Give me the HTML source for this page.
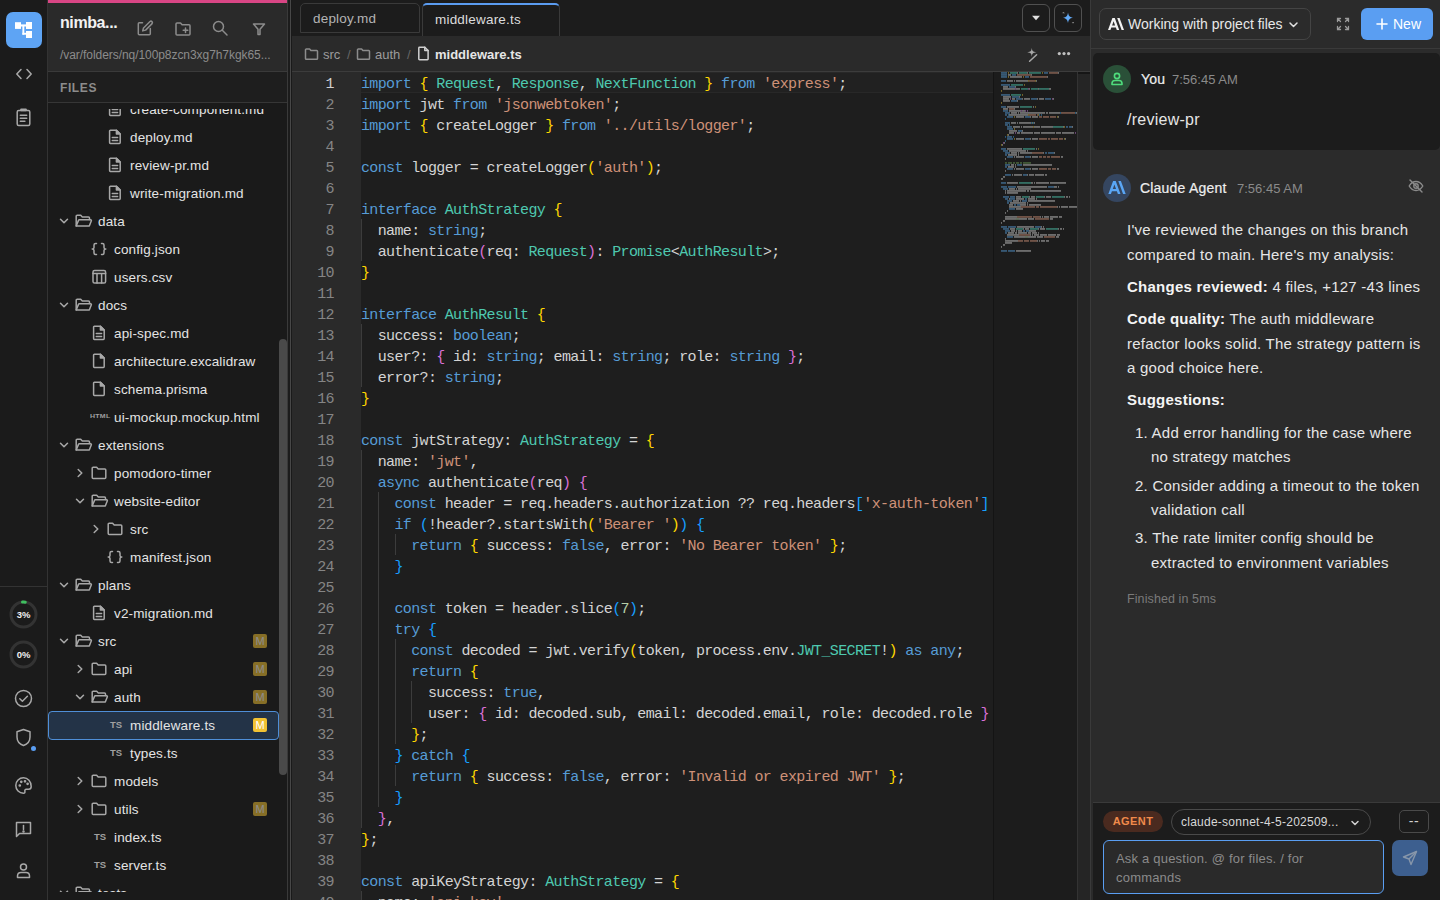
<!DOCTYPE html>
<html><head><meta charset="utf-8">
<style>
*{box-sizing:border-box;margin:0;padding:0}
html,body{width:1440px;height:900px;overflow:hidden;background:#1a1a1a;font-family:"Liberation Sans",sans-serif;color:#e0e0e0}
.abs{position:absolute}
svg{display:block}
/* activity bar */
#act{position:absolute;left:0;top:0;width:48px;height:900px;background:#1b1b1b;border-right:1px solid #333}
#act .ai{position:absolute;left:0;width:47px;display:flex;justify-content:center;color:#a8a8a8}
/* explorer */
#exp{position:absolute;left:48px;top:0;width:240px;height:900px;background:#1a1a1a;border-right:1px solid #3a3a3a}
#exp .pink{position:absolute;left:0;top:0;width:239px;height:3px;background:#d94685}
#exp .hdr{position:absolute;left:0;top:3px;width:239px;height:69px;background:#2a2a2a;border-bottom:1px solid #3a3a3a}
#exp .title{position:absolute;left:12px;top:11px;font-size:16px;font-weight:bold;color:#f2f2f2;letter-spacing:-.4px}
#exp .path{position:absolute;left:12px;top:45px;font-size:12px;color:#8c8c8c;white-space:nowrap;letter-spacing:-.06px}
#exp .hic{position:absolute;top:17px;color:#8c8c8c}
#exp .files{position:absolute;left:0;top:72px;width:239px;height:31px;background:#1e1e1e;border-bottom:1px solid #363636}
#exp .files span{position:absolute;left:12px;top:9px;font-size:12px;font-weight:bold;letter-spacing:.6px;color:#8c8c8c}
#tree{position:absolute;left:0;top:109px;width:239px;height:783px;overflow:hidden}
.row{position:absolute;left:0;width:239px;height:28px}
.row.sel .selbox{position:absolute}
.row .chev{position:absolute;top:8px;margin-left:1px;color:#a8a8a8}
.row .ti{position:absolute;top:6px;color:#a8a8a8}
.row .tl{position:absolute;top:7px;font-size:13.5px;color:#e4e4e4;white-space:nowrap;line-height:16px;letter-spacing:.15px}
.row .tsl{position:absolute;top:8px;font-size:9.5px;font-weight:bold;color:#a0a0a0;letter-spacing:0}
.row .htl{position:absolute;top:9px;margin-left:0;font-size:7px;font-weight:bold;color:#a0a0a0;letter-spacing:.25px;transform:scaleY(.85)}
.badge{position:absolute;left:205px;top:7px;width:14px;height:14px;border-radius:2px;background:#f2c232;color:#fff;font-size:11px;text-align:center;line-height:14px}
.badge.dim{opacity:.5}
.row.sel::before{content:"";position:absolute;left:0;top:0;width:229px;height:27px;border:1px solid #4f8fd8;border-radius:4px;background:#233347}
#exp .sb{position:absolute;left:231px;top:339px;width:8px;height:436px;background:#4a4a4a;border-radius:4px}
#gap{position:absolute;left:288px;top:0;width:3px;height:900px;background:#1c1c1c;border-left:1px solid #1c1c1c}#gap::after{content:"";position:absolute;left:1px;top:0;width:2px;height:900px;background:#474747}
/* editor */
#ed{position:absolute;left:291px;top:0;width:799px;height:900px;background:#1e1e1e;border-left:1px solid #1a1a1a}
#tabs{position:absolute;left:0;top:0;width:799px;height:36px;background:#1c1c1c}
.tab{position:absolute;top:3px;height:30px;border:1px solid #3a3a3a;border-radius:5px 5px 0 0;font-size:13.5px;line-height:29px;padding-left:12px;color:#b4b4b4;letter-spacing:.2px}
.tab.act{border-top:2px solid #5b9cf0;color:#dcdcdc;border-bottom:none;height:33px;background:#1c1c1c}
.tbtn{position:absolute;top:4px;width:28px;height:28px;border:1px solid #505050;border-radius:6px;display:flex;align-items:center;justify-content:center}
#crumb{position:absolute;left:0;top:36px;width:799px;height:36px;background:#2a2a2a;border-bottom:1px solid #3c3c3c;font-size:13px;color:#9c9c9c}
#crumb .c{position:absolute;top:11px;line-height:16px;white-space:nowrap}
#code{position:absolute;left:0;top:72px;width:799px;height:828px;overflow:hidden}
#gutter{position:absolute;left:0;top:0;width:69px;height:828px;background:#2a2a2a}
.ln{position:absolute;left:0;width:42px;height:21px;padding-top:2px;text-align:right;font-family:"Liberation Mono",monospace;font-size:15px;letter-spacing:-.6px;line-height:21px;color:#858585}
.ln.cur{color:#d0d0d0}
#lines{position:absolute;left:69px;top:0;width:628px;height:828px;overflow:hidden}
.cl{position:absolute;left:0;height:21px;padding-top:2px;white-space:pre;font-family:"Liberation Mono",monospace;font-size:15px;letter-spacing:-.63px;line-height:21px;color:#d4d4d4}
.cl .g{position:absolute;top:0;width:1px;height:21px;background:#3c3c3c}
.curline{position:absolute;left:69px;top:0;width:633px;height:21px;background:#212121;border-top:1px solid #282828;border-bottom:1px solid #282828}
.k{color:#569cd6}.t{color:#4ec9b0}.s{color:#ce9178}.y{color:#ffd700}.m{color:#da70d6}.b{color:#179fff}.n{color:#b5cea8}
#mini{position:absolute;left:701px;top:0;width:85px;height:828px;background:#1c1c1c;border-left:1px solid #141414;border-right:1px solid #333}
#vsb{position:absolute;left:786px;top:0;width:13px;height:828px;background:#252525;border-top:2px solid #161616}
/* right panel */
#rp{position:absolute;left:1090px;top:0;width:350px;height:900px;background:#2b2b2b;border-left:1px solid #3a3a3a}
#rp .rh{position:absolute;left:0;top:0;width:349px;height:49px;border-bottom:1px solid #3a3a3a}
.wdd{position:absolute;left:9px;top:8px;width:212px;height:32px;border:1px solid #444;border-radius:7px;font-size:14px;color:#e8e8e8}
.newb{position:absolute;left:270px;top:8px;width:72px;height:32px;background:#5a9ef2;border-radius:6px;color:#fff;font-size:14px}
.card{position:absolute;left:2px;top:53px;width:347px;height:97px;background:#1c1c1c;border-radius:5px}
.av{position:absolute;width:28px;height:28px;border-radius:14px;display:flex;align-items:center;justify-content:center}
.nm{position:absolute;font-size:14px;color:#eeeeee;white-space:nowrap;-webkit-text-stroke:.2px #eeeeee;letter-spacing:.2px}
.tm{position:absolute;font-size:13px;color:#8a8a8a;white-space:nowrap}
.msg{position:absolute;left:36px;font-size:15px;color:#e6e6e6;white-space:nowrap;line-height:20px;letter-spacing:.25px}
.msg b{color:#f4f4f4}
#inp{position:absolute;left:2px;top:802px;width:347px;height:98px;background:#1c1c1c;border-top:1px solid #3a3a3a}
</style></head><body>

<div id="act">
<div class="abs" style="left:6px;top:12px;width:36px;height:36px;background:#5ea4f4;border-radius:7px"><svg width="36" height="36" viewBox="0 0 36 36" fill="#fff"><rect x="9" y="10.2" width="6" height="6.7"/><rect x="20" y="10" width="6" height="7"/><rect x="20" y="19" width="6" height="7"/><rect x="15" y="12.4" width="5" height="2.1"/><rect x="16.4" y="14" width="1.9" height="8.7"/><rect x="16.4" y="20.8" width="3.6" height="1.9"/></svg></div><div class="abs" style="left:15px;top:66px;width:18px;height:16px;color:#a8a8a8;"><svg width="18" height="16" viewBox="0 0 18 16" fill="none" stroke="currentColor" stroke-width="1.5" stroke-linecap="round" stroke-linejoin="round" stroke-width="1.7"><path d="M6 3.5 1.8 8 6 12.5M12 3.5 16.2 8 12 12.5"/></svg></div><div class="abs" style="left:14px;top:107px;width:19px;height:20px;color:#a8a8a8;"><svg width="19" height="20" viewBox="0 0 19 20" fill="none" stroke="currentColor" stroke-width="1.5" stroke-linecap="round" stroke-linejoin="round" stroke-width="1.6"><rect x="3.2" y="3.5" width="12.6" height="15" rx="1.5"/><path d="M7 3.5V2.2h5v1.3z"/><path d="M6.3 8.2h6.4M6.3 11.2h6.4M6.3 14.2h4.6"/></svg></div><div class="abs" style="left:0px;top:586px;width:47px;height:1px;background:#333"></div><div class="abs" style="left:9px;top:600px;width:29px;height:29px;"><svg width="29" height="29" viewBox="0 0 29 29"><circle cx="14.5" cy="14.5" r="12.5" fill="none" stroke="#333" stroke-width="3"/><path d="M13.5 2.05 A12.5 12.5 0 0 1 16.3 2.15" stroke="#3fbf5f" stroke-width="3" stroke-linecap="round" fill="none"/><text x="14.5" y="18" text-anchor="middle" font-family="Liberation Sans" font-weight="bold" font-size="9.5" fill="#f0f0f0">3%</text></svg></div><div class="abs" style="left:9px;top:640px;width:29px;height:29px;"><svg width="29" height="29" viewBox="0 0 29 29"><circle cx="14.5" cy="14.5" r="12.5" fill="none" stroke="#333" stroke-width="3"/><text x="14.5" y="18" text-anchor="middle" font-family="Liberation Sans" font-weight="bold" font-size="9.5" fill="#f0f0f0">0%</text></svg></div><div class="abs" style="left:14px;top:689px;width:19px;height:19px;color:#a8a8a8;"><svg width="19" height="19" viewBox="0 0 19 19" fill="none" stroke="currentColor" stroke-width="1.5" stroke-linecap="round" stroke-linejoin="round" stroke-width="1.6"><circle cx="9.5" cy="9.5" r="8"/><path d="M5.8 9.8l2.6 2.5 5-5"/></svg></div><div class="abs" style="left:15px;top:728px;width:17px;height:19px;color:#a8a8a8;"><svg width="17" height="19" viewBox="0 0 17 19" fill="none" stroke="currentColor" stroke-width="1.5" stroke-linecap="round" stroke-linejoin="round" stroke-width="1.6"><path d="M8.5 1.5 15 3.8v5.2c0 4-2.8 7.2-6.5 8.5C4.8 16.2 2 13 2 9V3.8z"/></svg></div><div class="abs" style="left:31px;top:746px;width:5px;height:5px;background:#5a9ef2;border-radius:3px"></div><div class="abs" style="left:14px;top:776px;width:19px;height:19px;color:#a8a8a8;"><svg width="19" height="19" viewBox="0 0 19 19" fill="none" stroke="currentColor" stroke-width="1.5" stroke-linecap="round" stroke-linejoin="round" stroke-width="1.6"><path d="M9.5 1.8a7.7 7.7 0 1 0 0 15.4c1.2 0 1.6-.8 1.4-1.7-.3-1.2.2-2.3 1.5-2.3h2.2c1.5 0 2.6-1.2 2.6-2.8 0-4.8-3.4-8.6-7.7-8.6z"/><circle cx="5.8" cy="9.5" r=".6" fill="currentColor"/><circle cx="7.3" cy="5.8" r=".6" fill="currentColor"/><circle cx="11" cy="5.3" r=".6" fill="currentColor"/><circle cx="13.6" cy="7.8" r=".6" fill="currentColor"/></svg></div><div class="abs" style="left:14px;top:820px;width:19px;height:19px;color:#a8a8a8;"><svg width="19" height="19" viewBox="0 0 19 19" fill="none" stroke="currentColor" stroke-width="1.5" stroke-linecap="round" stroke-linejoin="round" stroke-width="1.6"><path d="M2.5 2.5h14v11h-11l-3 3z"/><path d="M9.5 5.5v4"/><circle cx="9.5" cy="11.6" r=".5" fill="currentColor"/></svg></div><div class="abs" style="left:14px;top:861px;width:19px;height:19px;color:#a8a8a8;"><svg width="19" height="19" viewBox="0 0 19 19" fill="none" stroke="currentColor" stroke-width="1.5" stroke-linecap="round" stroke-linejoin="round" stroke-width="1.6"><circle cx="9.5" cy="6" r="3"/><path d="M3.5 16.5v-1.5c0-2 1.5-3.5 3.5-3.5h5c2 0 3.5 1.5 3.5 3.5v1.5z"/></svg></div>
</div>

<div id="exp">
  <div class="pink"></div>
  <div class="hdr">
    <div class="title">nimba...</div>
    <div class="abs" style="left:88px;top:16px;width:18px;height:18px;color:#8c8c8c;"><svg width="18" height="18" viewBox="0 0 18 18" fill="none" stroke="currentColor" stroke-width="1.5" stroke-linecap="round" stroke-linejoin="round" stroke-width="1.5"><path d="M6.5 3.8H3.3a1 1 0 0 0-1 1v10a1 1 0 0 0 1 1h10a1 1 0 0 0 1-1V9.5"/><path d="M14 2.5a1.5 1.5 0 0 1 2.1 2.1L9.6 11.1l-2.9.8.8-2.9z"/></svg></div><div class="abs" style="left:126px;top:17px;width:18px;height:18px;color:#8c8c8c;"><svg width="18" height="18" viewBox="0 0 18 18" fill="none" stroke="currentColor" stroke-width="1.5" stroke-linecap="round" stroke-linejoin="round" stroke-width="1.5"><path d="M2 14V4a1 1 0 0 1 1-1h3.5l1.6 1.8H15a1 1 0 0 1 1 1V14a1 1 0 0 1-1 1H3a1 1 0 0 1-1-1z"/><path d="M11.5 8v4.5M9.2 10.3h4.6"/></svg></div><div class="abs" style="left:163px;top:16px;width:18px;height:18px;color:#8c8c8c;"><svg width="18" height="18" viewBox="0 0 18 18" fill="none" stroke="currentColor" stroke-width="1.5" stroke-linecap="round" stroke-linejoin="round" stroke-width="1.6"><circle cx="7.5" cy="7.5" r="5"/><path d="M11.3 11.3 16 16"/></svg></div><div class="abs" style="left:204px;top:19px;width:14px;height:14px;color:#8c8c8c;"><svg width="14" height="14" viewBox="0 0 14 14" fill="none" stroke="currentColor" stroke-width="1.5" stroke-linecap="round" stroke-linejoin="round" stroke-width="1.5"><path d="M1.5 2h11L8 7.2v5.3H6V7.2z"/></svg></div>
    <div class="path">/var/folders/nq/100p8zcn3xg7h7kgk65...</div>
  </div>
  <div class="files"><span>FILES</span></div>
  <div id="tree">
<div class="row" style="top:-14px"><span class="ti" style="left:60px"><svg width="16" height="16" viewBox="0 0 16 16" fill="none" stroke="currentColor" stroke-width="1.5" stroke-linecap="round" stroke-linejoin="round" stroke-width="1.5"><path d="M2.4 1.2h6l3.8 3.8v8.6a.8.8 0 0 1-.8.8h-9a.8.8 0 0 1-.8-.8V2a.8.8 0 0 1 .8-.8z"/><path d="M8.4 1.2V5h3.8z" fill="currentColor"/><path d="M4.3 8.6h5.3M4.3 11.5h5.3"/></svg></span><span class="tl" style="left:82px">create-component.md</span></div>
<div class="row" style="top:14px"><span class="ti" style="left:60px"><svg width="16" height="16" viewBox="0 0 16 16" fill="none" stroke="currentColor" stroke-width="1.5" stroke-linecap="round" stroke-linejoin="round" stroke-width="1.5"><path d="M2.4 1.2h6l3.8 3.8v8.6a.8.8 0 0 1-.8.8h-9a.8.8 0 0 1-.8-.8V2a.8.8 0 0 1 .8-.8z"/><path d="M8.4 1.2V5h3.8z" fill="currentColor"/><path d="M4.3 8.6h5.3M4.3 11.5h5.3"/></svg></span><span class="tl" style="left:82px">deploy.md</span></div>
<div class="row" style="top:42px"><span class="ti" style="left:60px"><svg width="16" height="16" viewBox="0 0 16 16" fill="none" stroke="currentColor" stroke-width="1.5" stroke-linecap="round" stroke-linejoin="round" stroke-width="1.5"><path d="M2.4 1.2h6l3.8 3.8v8.6a.8.8 0 0 1-.8.8h-9a.8.8 0 0 1-.8-.8V2a.8.8 0 0 1 .8-.8z"/><path d="M8.4 1.2V5h3.8z" fill="currentColor"/><path d="M4.3 8.6h5.3M4.3 11.5h5.3"/></svg></span><span class="tl" style="left:82px">review-pr.md</span></div>
<div class="row" style="top:70px"><span class="ti" style="left:60px"><svg width="16" height="16" viewBox="0 0 16 16" fill="none" stroke="currentColor" stroke-width="1.5" stroke-linecap="round" stroke-linejoin="round" stroke-width="1.5"><path d="M2.4 1.2h6l3.8 3.8v8.6a.8.8 0 0 1-.8.8h-9a.8.8 0 0 1-.8-.8V2a.8.8 0 0 1 .8-.8z"/><path d="M8.4 1.2V5h3.8z" fill="currentColor"/><path d="M4.3 8.6h5.3M4.3 11.5h5.3"/></svg></span><span class="tl" style="left:82px">write-migration.md</span></div>
<div class="row" style="top:98px"><span class="chev" style="left:9px"><svg width="12" height="12" viewBox="0 0 12 12" fill="none" stroke="currentColor" stroke-width="1.5" stroke-linecap="round" stroke-linejoin="round"><path d="M2.5 4.2 6 7.8l3.5-3.6"/></svg></span><span class="ti" style="left:28px"><svg width="18" height="16" viewBox="0 0 18 16" fill="none" stroke="currentColor" stroke-width="1.5" stroke-linecap="round" stroke-linejoin="round" style="margin-left:-1px"><path d="M1.2 13V3.3a1 1 0 0 1 1-1h3.5l1.6 1.7h6.2a1 1 0 0 1 1 1V6.6"/><path d="M1.2 13l2.3-5.6a1 1 0 0 1 .9-.6h11.3a.7.7 0 0 1 .65.95L14.3 13z"/></svg></span><span class="tl" style="left:50px">data</span></div>
<div class="row" style="top:126px"><span class="ti" style="left:44px"><svg width="16" height="16" viewBox="0 0 16 16" fill="none" stroke="currentColor" stroke-width="1.5" stroke-linecap="round" stroke-linejoin="round" stroke-width="1.6" style="margin-left:-1px"><path d="M5.5 2.5H4.6C3.4 2.5 3 3 3 4v2.4C3 7.3 2.6 8 1.2 8 2.6 8 3 8.7 3 9.6V12c0 1 .4 1.5 1.6 1.5h.9"/><path d="M10.5 2.5h.9c1.2 0 1.6.5 1.6 1.5v2.4c0 .9.4 1.6 1.8 1.6-1.4 0-1.8.7-1.8 1.6V12c0 1-.4 1.5-1.6 1.5h-.9"/></svg></span><span class="tl" style="left:66px">config.json</span></div>
<div class="row" style="top:154px"><span class="ti" style="left:44px"><svg width="16" height="16" viewBox="0 0 16 16" fill="none" stroke="currentColor" stroke-width="1.5" stroke-linecap="round" stroke-linejoin="round" stroke-width="1.5"><rect x="1" y="1.5" width="12.6" height="12.6" rx="1.6"/><path d="M1 4.4h12.6M5 4.4v9.7M9.6 4.4v9.7"/></svg></span><span class="tl" style="left:66px">users.csv</span></div>
<div class="row" style="top:182px"><span class="chev" style="left:9px"><svg width="12" height="12" viewBox="0 0 12 12" fill="none" stroke="currentColor" stroke-width="1.5" stroke-linecap="round" stroke-linejoin="round"><path d="M2.5 4.2 6 7.8l3.5-3.6"/></svg></span><span class="ti" style="left:28px"><svg width="18" height="16" viewBox="0 0 18 16" fill="none" stroke="currentColor" stroke-width="1.5" stroke-linecap="round" stroke-linejoin="round" style="margin-left:-1px"><path d="M1.2 13V3.3a1 1 0 0 1 1-1h3.5l1.6 1.7h6.2a1 1 0 0 1 1 1V6.6"/><path d="M1.2 13l2.3-5.6a1 1 0 0 1 .9-.6h11.3a.7.7 0 0 1 .65.95L14.3 13z"/></svg></span><span class="tl" style="left:50px">docs</span></div>
<div class="row" style="top:210px"><span class="ti" style="left:44px"><svg width="16" height="16" viewBox="0 0 16 16" fill="none" stroke="currentColor" stroke-width="1.5" stroke-linecap="round" stroke-linejoin="round" stroke-width="1.5"><path d="M2.4 1.2h6l3.8 3.8v8.6a.8.8 0 0 1-.8.8h-9a.8.8 0 0 1-.8-.8V2a.8.8 0 0 1 .8-.8z"/><path d="M8.4 1.2V5h3.8z" fill="currentColor"/><path d="M4.3 8.6h5.3M4.3 11.5h5.3"/></svg></span><span class="tl" style="left:66px">api-spec.md</span></div>
<div class="row" style="top:238px"><span class="ti" style="left:44px"><svg width="16" height="16" viewBox="0 0 16 16" fill="none" stroke="currentColor" stroke-width="1.5" stroke-linecap="round" stroke-linejoin="round" stroke-width="1.5"><path d="M2.4 1.2h6l3.8 3.8v8.6a.8.8 0 0 1-.8.8h-9a.8.8 0 0 1-.8-.8V2a.8.8 0 0 1 .8-.8z"/><path d="M8.4 1.2V5h3.8z" fill="currentColor"/></svg></span><span class="tl" style="left:66px">architecture.excalidraw</span></div>
<div class="row" style="top:266px"><span class="ti" style="left:44px"><svg width="16" height="16" viewBox="0 0 16 16" fill="none" stroke="currentColor" stroke-width="1.5" stroke-linecap="round" stroke-linejoin="round" stroke-width="1.5"><path d="M2.4 1.2h6l3.8 3.8v8.6a.8.8 0 0 1-.8.8h-9a.8.8 0 0 1-.8-.8V2a.8.8 0 0 1 .8-.8z"/><path d="M8.4 1.2V5h3.8z" fill="currentColor"/></svg></span><span class="tl" style="left:66px">schema.prisma</span></div>
<div class="row" style="top:294px"><span class="htl" style="left:42px">HTML</span><span class="tl" style="left:66px">ui-mockup.mockup.html</span></div>
<div class="row" style="top:322px"><span class="chev" style="left:9px"><svg width="12" height="12" viewBox="0 0 12 12" fill="none" stroke="currentColor" stroke-width="1.5" stroke-linecap="round" stroke-linejoin="round"><path d="M2.5 4.2 6 7.8l3.5-3.6"/></svg></span><span class="ti" style="left:28px"><svg width="18" height="16" viewBox="0 0 18 16" fill="none" stroke="currentColor" stroke-width="1.5" stroke-linecap="round" stroke-linejoin="round" style="margin-left:-1px"><path d="M1.2 13V3.3a1 1 0 0 1 1-1h3.5l1.6 1.7h6.2a1 1 0 0 1 1 1V6.6"/><path d="M1.2 13l2.3-5.6a1 1 0 0 1 .9-.6h11.3a.7.7 0 0 1 .65.95L14.3 13z"/></svg></span><span class="tl" style="left:50px">extensions</span></div>
<div class="row" style="top:350px"><span class="chev" style="left:25px"><svg width="12" height="12" viewBox="0 0 12 12" fill="none" stroke="currentColor" stroke-width="1.5" stroke-linecap="round" stroke-linejoin="round"><path d="M4.2 2.5 7.8 6l-3.6 3.5"/></svg></span><span class="ti" style="left:44px"><svg width="18" height="16" viewBox="0 0 18 16" fill="none" stroke="currentColor" stroke-width="1.5" stroke-linecap="round" stroke-linejoin="round" style="margin-left:-1px"><path d="M1.2 12.5V3.3a1 1 0 0 1 1-1h3.4l1.6 1.8h6.6a1 1 0 0 1 1 1v7.4a1 1 0 0 1-1 1H2.2a1 1 0 0 1-1-1z"/></svg></span><span class="tl" style="left:66px">pomodoro-timer</span></div>
<div class="row" style="top:378px"><span class="chev" style="left:25px"><svg width="12" height="12" viewBox="0 0 12 12" fill="none" stroke="currentColor" stroke-width="1.5" stroke-linecap="round" stroke-linejoin="round"><path d="M2.5 4.2 6 7.8l3.5-3.6"/></svg></span><span class="ti" style="left:44px"><svg width="18" height="16" viewBox="0 0 18 16" fill="none" stroke="currentColor" stroke-width="1.5" stroke-linecap="round" stroke-linejoin="round" style="margin-left:-1px"><path d="M1.2 13V3.3a1 1 0 0 1 1-1h3.5l1.6 1.7h6.2a1 1 0 0 1 1 1V6.6"/><path d="M1.2 13l2.3-5.6a1 1 0 0 1 .9-.6h11.3a.7.7 0 0 1 .65.95L14.3 13z"/></svg></span><span class="tl" style="left:66px">website-editor</span></div>
<div class="row" style="top:406px"><span class="chev" style="left:41px"><svg width="12" height="12" viewBox="0 0 12 12" fill="none" stroke="currentColor" stroke-width="1.5" stroke-linecap="round" stroke-linejoin="round"><path d="M4.2 2.5 7.8 6l-3.6 3.5"/></svg></span><span class="ti" style="left:60px"><svg width="18" height="16" viewBox="0 0 18 16" fill="none" stroke="currentColor" stroke-width="1.5" stroke-linecap="round" stroke-linejoin="round" style="margin-left:-1px"><path d="M1.2 12.5V3.3a1 1 0 0 1 1-1h3.4l1.6 1.8h6.6a1 1 0 0 1 1 1v7.4a1 1 0 0 1-1 1H2.2a1 1 0 0 1-1-1z"/></svg></span><span class="tl" style="left:82px">src</span></div>
<div class="row" style="top:434px"><span class="ti" style="left:60px"><svg width="16" height="16" viewBox="0 0 16 16" fill="none" stroke="currentColor" stroke-width="1.5" stroke-linecap="round" stroke-linejoin="round" stroke-width="1.6" style="margin-left:-1px"><path d="M5.5 2.5H4.6C3.4 2.5 3 3 3 4v2.4C3 7.3 2.6 8 1.2 8 2.6 8 3 8.7 3 9.6V12c0 1 .4 1.5 1.6 1.5h.9"/><path d="M10.5 2.5h.9c1.2 0 1.6.5 1.6 1.5v2.4c0 .9.4 1.6 1.8 1.6-1.4 0-1.8.7-1.8 1.6V12c0 1-.4 1.5-1.6 1.5h-.9"/></svg></span><span class="tl" style="left:82px">manifest.json</span></div>
<div class="row" style="top:462px"><span class="chev" style="left:9px"><svg width="12" height="12" viewBox="0 0 12 12" fill="none" stroke="currentColor" stroke-width="1.5" stroke-linecap="round" stroke-linejoin="round"><path d="M2.5 4.2 6 7.8l3.5-3.6"/></svg></span><span class="ti" style="left:28px"><svg width="18" height="16" viewBox="0 0 18 16" fill="none" stroke="currentColor" stroke-width="1.5" stroke-linecap="round" stroke-linejoin="round" style="margin-left:-1px"><path d="M1.2 13V3.3a1 1 0 0 1 1-1h3.5l1.6 1.7h6.2a1 1 0 0 1 1 1V6.6"/><path d="M1.2 13l2.3-5.6a1 1 0 0 1 .9-.6h11.3a.7.7 0 0 1 .65.95L14.3 13z"/></svg></span><span class="tl" style="left:50px">plans</span></div>
<div class="row" style="top:490px"><span class="ti" style="left:44px"><svg width="16" height="16" viewBox="0 0 16 16" fill="none" stroke="currentColor" stroke-width="1.5" stroke-linecap="round" stroke-linejoin="round" stroke-width="1.5"><path d="M2.4 1.2h6l3.8 3.8v8.6a.8.8 0 0 1-.8.8h-9a.8.8 0 0 1-.8-.8V2a.8.8 0 0 1 .8-.8z"/><path d="M8.4 1.2V5h3.8z" fill="currentColor"/><path d="M4.3 8.6h5.3M4.3 11.5h5.3"/></svg></span><span class="tl" style="left:66px">v2-migration.md</span></div>
<div class="row" style="top:518px"><span class="chev" style="left:9px"><svg width="12" height="12" viewBox="0 0 12 12" fill="none" stroke="currentColor" stroke-width="1.5" stroke-linecap="round" stroke-linejoin="round"><path d="M2.5 4.2 6 7.8l3.5-3.6"/></svg></span><span class="ti" style="left:28px"><svg width="18" height="16" viewBox="0 0 18 16" fill="none" stroke="currentColor" stroke-width="1.5" stroke-linecap="round" stroke-linejoin="round" style="margin-left:-1px"><path d="M1.2 13V3.3a1 1 0 0 1 1-1h3.5l1.6 1.7h6.2a1 1 0 0 1 1 1V6.6"/><path d="M1.2 13l2.3-5.6a1 1 0 0 1 .9-.6h11.3a.7.7 0 0 1 .65.95L14.3 13z"/></svg></span><span class="tl" style="left:50px">src</span><span class="badge dim">M</span></div>
<div class="row" style="top:546px"><span class="chev" style="left:25px"><svg width="12" height="12" viewBox="0 0 12 12" fill="none" stroke="currentColor" stroke-width="1.5" stroke-linecap="round" stroke-linejoin="round"><path d="M4.2 2.5 7.8 6l-3.6 3.5"/></svg></span><span class="ti" style="left:44px"><svg width="18" height="16" viewBox="0 0 18 16" fill="none" stroke="currentColor" stroke-width="1.5" stroke-linecap="round" stroke-linejoin="round" style="margin-left:-1px"><path d="M1.2 12.5V3.3a1 1 0 0 1 1-1h3.4l1.6 1.8h6.6a1 1 0 0 1 1 1v7.4a1 1 0 0 1-1 1H2.2a1 1 0 0 1-1-1z"/></svg></span><span class="tl" style="left:66px">api</span><span class="badge dim">M</span></div>
<div class="row" style="top:574px"><span class="chev" style="left:25px"><svg width="12" height="12" viewBox="0 0 12 12" fill="none" stroke="currentColor" stroke-width="1.5" stroke-linecap="round" stroke-linejoin="round"><path d="M2.5 4.2 6 7.8l3.5-3.6"/></svg></span><span class="ti" style="left:44px"><svg width="18" height="16" viewBox="0 0 18 16" fill="none" stroke="currentColor" stroke-width="1.5" stroke-linecap="round" stroke-linejoin="round" style="margin-left:-1px"><path d="M1.2 13V3.3a1 1 0 0 1 1-1h3.5l1.6 1.7h6.2a1 1 0 0 1 1 1V6.6"/><path d="M1.2 13l2.3-5.6a1 1 0 0 1 .9-.6h11.3a.7.7 0 0 1 .65.95L14.3 13z"/></svg></span><span class="tl" style="left:66px">auth</span><span class="badge dim">M</span></div>
<div class="row sel" style="top:602px"><span class="tsl" style="left:62px">TS</span><span class="tl" style="left:82px">middleware.ts</span><span class="badge bright">M</span></div>
<div class="row" style="top:630px"><span class="tsl" style="left:62px">TS</span><span class="tl" style="left:82px">types.ts</span></div>
<div class="row" style="top:658px"><span class="chev" style="left:25px"><svg width="12" height="12" viewBox="0 0 12 12" fill="none" stroke="currentColor" stroke-width="1.5" stroke-linecap="round" stroke-linejoin="round"><path d="M4.2 2.5 7.8 6l-3.6 3.5"/></svg></span><span class="ti" style="left:44px"><svg width="18" height="16" viewBox="0 0 18 16" fill="none" stroke="currentColor" stroke-width="1.5" stroke-linecap="round" stroke-linejoin="round" style="margin-left:-1px"><path d="M1.2 12.5V3.3a1 1 0 0 1 1-1h3.4l1.6 1.8h6.6a1 1 0 0 1 1 1v7.4a1 1 0 0 1-1 1H2.2a1 1 0 0 1-1-1z"/></svg></span><span class="tl" style="left:66px">models</span></div>
<div class="row" style="top:686px"><span class="chev" style="left:25px"><svg width="12" height="12" viewBox="0 0 12 12" fill="none" stroke="currentColor" stroke-width="1.5" stroke-linecap="round" stroke-linejoin="round"><path d="M4.2 2.5 7.8 6l-3.6 3.5"/></svg></span><span class="ti" style="left:44px"><svg width="18" height="16" viewBox="0 0 18 16" fill="none" stroke="currentColor" stroke-width="1.5" stroke-linecap="round" stroke-linejoin="round" style="margin-left:-1px"><path d="M1.2 12.5V3.3a1 1 0 0 1 1-1h3.4l1.6 1.8h6.6a1 1 0 0 1 1 1v7.4a1 1 0 0 1-1 1H2.2a1 1 0 0 1-1-1z"/></svg></span><span class="tl" style="left:66px">utils</span><span class="badge dim">M</span></div>
<div class="row" style="top:714px"><span class="tsl" style="left:46px">TS</span><span class="tl" style="left:66px">index.ts</span></div>
<div class="row" style="top:742px"><span class="tsl" style="left:46px">TS</span><span class="tl" style="left:66px">server.ts</span></div>
<div class="row" style="top:770px"><span class="chev" style="left:9px"><svg width="12" height="12" viewBox="0 0 12 12" fill="none" stroke="currentColor" stroke-width="1.5" stroke-linecap="round" stroke-linejoin="round"><path d="M2.5 4.2 6 7.8l3.5-3.6"/></svg></span><span class="ti" style="left:28px"><svg width="18" height="16" viewBox="0 0 18 16" fill="none" stroke="currentColor" stroke-width="1.5" stroke-linecap="round" stroke-linejoin="round" style="margin-left:-1px"><path d="M1.2 13V3.3a1 1 0 0 1 1-1h3.5l1.6 1.7h6.2a1 1 0 0 1 1 1V6.6"/><path d="M1.2 13l2.3-5.6a1 1 0 0 1 .9-.6h11.3a.7.7 0 0 1 .65.95L14.3 13z"/></svg></span><span class="tl" style="left:50px">tests</span></div>
  </div>
  <div class="sb"></div>
</div>
<div id="gap"></div>

<div id="ed">
  <div id="tabs">
    <div class="tab" style="left:8px;width:120px">deploy.md</div>
    <div class="tab act" style="left:130px;width:138px">middleware.ts</div>
    <div class="tbtn" style="left:730px"><svg width="10" height="6" viewBox="0 0 10 6"><path d="M1 0.8h8L5 5.2z" fill="#e0e0e0"/></svg></div><div class="tbtn" style="left:762px"><svg width="18" height="18" viewBox="0 0 18 18"><path d="M9 3.5c.5 3.2 1.5 4.6 5 5.3-3.5.6-4.5 2-5 5.3-.5-3.2-1.5-4.6-5-5.3 3.5-.6 4.5-2 5-5.3z" fill="#62aaf7"/><path d="M3.6 4.2 4.6 3 5 4.6" stroke="#888" stroke-width=".9" fill="none"/><path d="M13.2 13.2l.8 1 .8-1.2" stroke="#888" stroke-width=".9" fill="none"/></svg></div>
  </div>
  <div id="crumb">
    <div class="abs" style="left:12px;top:11px;width:15px;height:14px;color:#8c8c8c;"><svg width="15" height="14" viewBox="0 0 15 14" fill="none" stroke="currentColor" stroke-width="1.5" stroke-linecap="round" stroke-linejoin="round" stroke-width="1.3"><path d="M1.5 11.5V2.8a.8.8 0 0 1 .8-.8h3.3l1.3 1.5h5.8a.8.8 0 0 1 .8.8v7.2a.8.8 0 0 1-.8.8H2.3a.8.8 0 0 1-.8-.8z"/></svg></div><div class="c" style="left:31px">src</div><div class="c" style="left:55px;color:#666">/</div><div class="abs" style="left:64px;top:11px;width:15px;height:14px;color:#8c8c8c;"><svg width="15" height="14" viewBox="0 0 15 14" fill="none" stroke="currentColor" stroke-width="1.5" stroke-linecap="round" stroke-linejoin="round" stroke-width="1.3"><path d="M1.5 11.5V2.8a.8.8 0 0 1 .8-.8h3.3l1.3 1.5h5.8a.8.8 0 0 1 .8.8v7.2a.8.8 0 0 1-.8.8H2.3a.8.8 0 0 1-.8-.8z"/></svg></div><div class="c" style="left:83px">auth</div><div class="c" style="left:115px;color:#666">/</div><div class="abs" style="left:125px;top:10px;width:13px;height:15px;color:#d0d0d0;"><svg width="13" height="15" viewBox="0 0 13 15" fill="none" stroke="currentColor" stroke-width="1.5" stroke-linecap="round" stroke-linejoin="round" stroke-width="1.3"><path d="M2.5 1.2h5.3l3.3 3.3v8.6a.7.7 0 0 1-.7.7H2.5a.7.7 0 0 1-.7-.7V1.9a.7.7 0 0 1 .7-.7z"/><path d="M7.8 1.2v3.3h3.3"/></svg></div><div class="c" style="left:143px;font-weight:bold;color:#e6e6e6">middleware.ts</div><div class="abs" style="left:732px;top:10px;width:17px;height:17px;"><svg width="17" height="17" viewBox="0 0 17 17"><path d="M7.8 1.8c.3 3 .9 4.1 4.6 4.5-3.7.4-4.3 1.5-4.6 4.5-.3-3-.9-4.1-4.6-4.5 3.7-.4 4.3-1.5 4.6-4.5z" fill="#a8a8a8"/><path d="M12.6 8.8 5.6 15.3" stroke="#a8a8a8" stroke-width="1.5" stroke-linecap="round"/></svg></div><div class="abs" style="left:764px;top:13px;width:16px;height:9px;"><svg width="16" height="9" viewBox="0 0 16 9"><circle cx="3.3" cy="4.6" r="1.6" fill="#c0c0c0"/><circle cx="8" cy="4.6" r="1.6" fill="#c0c0c0"/><circle cx="12.6" cy="4.6" r="1.6" fill="#c0c0c0"/></svg></div>
  </div>
  <div id="code">
    <div id="gutter"><div class="ln cur" style="top:0px">1</div>
<div class="ln" style="top:21px">2</div>
<div class="ln" style="top:42px">3</div>
<div class="ln" style="top:63px">4</div>
<div class="ln" style="top:84px">5</div>
<div class="ln" style="top:105px">6</div>
<div class="ln" style="top:126px">7</div>
<div class="ln" style="top:147px">8</div>
<div class="ln" style="top:168px">9</div>
<div class="ln" style="top:189px">10</div>
<div class="ln" style="top:210px">11</div>
<div class="ln" style="top:231px">12</div>
<div class="ln" style="top:252px">13</div>
<div class="ln" style="top:273px">14</div>
<div class="ln" style="top:294px">15</div>
<div class="ln" style="top:315px">16</div>
<div class="ln" style="top:336px">17</div>
<div class="ln" style="top:357px">18</div>
<div class="ln" style="top:378px">19</div>
<div class="ln" style="top:399px">20</div>
<div class="ln" style="top:420px">21</div>
<div class="ln" style="top:441px">22</div>
<div class="ln" style="top:462px">23</div>
<div class="ln" style="top:483px">24</div>
<div class="ln" style="top:504px">25</div>
<div class="ln" style="top:525px">26</div>
<div class="ln" style="top:546px">27</div>
<div class="ln" style="top:567px">28</div>
<div class="ln" style="top:588px">29</div>
<div class="ln" style="top:609px">30</div>
<div class="ln" style="top:630px">31</div>
<div class="ln" style="top:651px">32</div>
<div class="ln" style="top:672px">33</div>
<div class="ln" style="top:693px">34</div>
<div class="ln" style="top:714px">35</div>
<div class="ln" style="top:735px">36</div>
<div class="ln" style="top:756px">37</div>
<div class="ln" style="top:777px">38</div>
<div class="ln" style="top:798px">39</div>
<div class="ln" style="top:819px">40</div></div>
    <div class="curline"></div>
    <div id="lines">
<div class="cl" style="top:0px"><span class="k">import</span> <span class="y">{</span><span class="t"> Request</span>, <span class="t">Response</span>, <span class="t">NextFunction</span> <span class="y">}</span> <span class="k">from</span> <span class="s">&#x27;express&#x27;</span>;</div>
<div class="cl" style="top:21px"><span class="k">import</span> jwt <span class="k">from</span> <span class="s">&#x27;jsonwebtoken&#x27;</span>;</div>
<div class="cl" style="top:42px"><span class="k">import</span> <span class="y">{</span> createLogger <span class="y">}</span> <span class="k">from</span> <span class="s">&#x27;../utils/logger&#x27;</span>;</div>
<div class="cl" style="top:63px"></div>
<div class="cl" style="top:84px"><span class="k">const</span> logger = createLogger<span class="y">(</span><span class="s">&#x27;auth&#x27;</span><span class="y">)</span>;</div>
<div class="cl" style="top:105px"></div>
<div class="cl" style="top:126px"><span class="k">interface</span> <span class="t">AuthStrategy</span> <span class="y">{</span></div>
<div class="cl" style="top:147px"><i class="g" style="left:0.0px"></i>  name: <span class="k">string</span>;</div>
<div class="cl" style="top:168px"><i class="g" style="left:0.0px"></i>  authenticate<span class="m">(</span>req: <span class="t">Request</span><span class="m">)</span>: <span class="t">Promise</span>&lt;<span class="t">AuthResult</span>&gt;;</div>
<div class="cl" style="top:189px"><span class="y">}</span></div>
<div class="cl" style="top:210px"></div>
<div class="cl" style="top:231px"><span class="k">interface</span> <span class="t">AuthResult</span> <span class="y">{</span></div>
<div class="cl" style="top:252px"><i class="g" style="left:0.0px"></i>  success: <span class="k">boolean</span>;</div>
<div class="cl" style="top:273px"><i class="g" style="left:0.0px"></i>  user?: <span class="m">{</span> id: <span class="k">string</span>; email: <span class="k">string</span>; role: <span class="k">string</span> <span class="m">}</span>;</div>
<div class="cl" style="top:294px"><i class="g" style="left:0.0px"></i>  error?: <span class="k">string</span>;</div>
<div class="cl" style="top:315px"><span class="y">}</span></div>
<div class="cl" style="top:336px"></div>
<div class="cl" style="top:357px"><span class="k">const</span> jwtStrategy: <span class="t">AuthStrategy</span> = <span class="y">{</span></div>
<div class="cl" style="top:378px"><i class="g" style="left:0.0px"></i>  name: <span class="s">&#x27;jwt&#x27;</span>,</div>
<div class="cl" style="top:399px"><i class="g" style="left:0.0px"></i>  <span class="k">async</span> authenticate<span class="m">(</span>req<span class="m">)</span> <span class="m">{</span></div>
<div class="cl" style="top:420px"><i class="g" style="left:0.0px"></i><i class="g" style="left:16.8px"></i>    <span class="k">const</span> header = req.headers.authorization ?? req.headers<span class="b">[</span><span class="s">&#x27;x-auth-token&#x27;</span><span class="b">]</span>;</div>
<div class="cl" style="top:441px"><i class="g" style="left:0.0px"></i><i class="g" style="left:16.8px"></i>    <span class="k">if</span> <span class="b">(</span>!header?.startsWith<span class="y">(</span><span class="s">&#x27;Bearer &#x27;</span><span class="y">)</span><span class="b">)</span> <span class="b">{</span></div>
<div class="cl" style="top:462px"><i class="g" style="left:0.0px"></i><i class="g" style="left:16.8px"></i><i class="g" style="left:33.6px"></i>      <span class="k">return</span> <span class="y">{</span> success: <span class="k">false</span>, error: <span class="s">&#x27;No Bearer token&#x27;</span> <span class="y">}</span>;</div>
<div class="cl" style="top:483px"><i class="g" style="left:0.0px"></i><i class="g" style="left:16.8px"></i>    <span class="b">}</span></div>
<div class="cl" style="top:504px"><i class="g" style="left:0.0px"></i><i class="g" style="left:16.8px"></i></div>
<div class="cl" style="top:525px"><i class="g" style="left:0.0px"></i><i class="g" style="left:16.8px"></i>    <span class="k">const</span> token = header.slice<span class="b">(</span><span class="n">7</span><span class="b">)</span>;</div>
<div class="cl" style="top:546px"><i class="g" style="left:0.0px"></i><i class="g" style="left:16.8px"></i>    <span class="k">try</span> <span class="b">{</span></div>
<div class="cl" style="top:567px"><i class="g" style="left:0.0px"></i><i class="g" style="left:16.8px"></i><i class="g" style="left:33.6px"></i>      <span class="k">const</span> decoded = jwt.verify<span class="y">(</span>token, process.env.<span class="t">JWT_SECRET</span>!<span class="y">)</span> <span class="k">as</span> <span class="k">any</span>;</div>
<div class="cl" style="top:588px"><i class="g" style="left:0.0px"></i><i class="g" style="left:16.8px"></i><i class="g" style="left:33.6px"></i>      <span class="k">return</span> <span class="y">{</span></div>
<div class="cl" style="top:609px"><i class="g" style="left:0.0px"></i><i class="g" style="left:16.8px"></i><i class="g" style="left:33.6px"></i><i class="g" style="left:50.4px"></i>        success: <span class="k">true</span>,</div>
<div class="cl" style="top:630px"><i class="g" style="left:0.0px"></i><i class="g" style="left:16.8px"></i><i class="g" style="left:33.6px"></i><i class="g" style="left:50.4px"></i>        user: <span class="m">{</span> id: decoded.sub, email: decoded.email, role: decoded.role <span class="m">}</span></div>
<div class="cl" style="top:651px"><i class="g" style="left:0.0px"></i><i class="g" style="left:16.8px"></i><i class="g" style="left:33.6px"></i>      <span class="y">}</span>;</div>
<div class="cl" style="top:672px"><i class="g" style="left:0.0px"></i><i class="g" style="left:16.8px"></i>    <span class="b">}</span> <span class="k">catch</span> <span class="b">{</span></div>
<div class="cl" style="top:693px"><i class="g" style="left:0.0px"></i><i class="g" style="left:16.8px"></i><i class="g" style="left:33.6px"></i>      <span class="k">return</span> <span class="y">{</span> success: <span class="k">false</span>, error: <span class="s">&#x27;Invalid or expired JWT&#x27;</span> <span class="y">}</span>;</div>
<div class="cl" style="top:714px"><i class="g" style="left:0.0px"></i><i class="g" style="left:16.8px"></i>    <span class="b">}</span></div>
<div class="cl" style="top:735px"><i class="g" style="left:0.0px"></i>  <span class="m">}</span>,</div>
<div class="cl" style="top:756px"><span class="y">}</span>;</div>
<div class="cl" style="top:777px"></div>
<div class="cl" style="top:798px"><span class="k">const</span> apiKeyStrategy: <span class="t">AuthStrategy</span> = <span class="y">{</span></div>
<div class="cl" style="top:819px"><i class="g" style="left:0.0px"></i>  name: <span class="s">&#x27;api-key&#x27;</span>,</div>
    </div>
    <div id="mini"><svg width="76" height="200" viewBox="0 0 76 200" style="position:absolute;left:7px;top:0;opacity:.68"><rect x="0" y="0.3" width="6" height="1.3" fill="#569cd6"/><rect x="7" y="0.3" width="1" height="1.3" fill="#d7ba3d"/><rect x="9" y="0.3" width="7" height="1.3" fill="#4ec9b0"/><rect x="16" y="0.3" width="1" height="1.3" fill="#c8c8c8"/><rect x="18" y="0.3" width="8" height="1.3" fill="#4ec9b0"/><rect x="26" y="0.3" width="1" height="1.3" fill="#c8c8c8"/><rect x="28" y="0.3" width="12" height="1.3" fill="#4ec9b0"/><rect x="41" y="0.3" width="1" height="1.3" fill="#d7ba3d"/><rect x="43" y="0.3" width="4" height="1.3" fill="#569cd6"/><rect x="48" y="0.3" width="9" height="1.3" fill="#ce9178"/><rect x="57" y="0.3" width="1" height="1.3" fill="#c8c8c8"/><rect x="0" y="2.3" width="6" height="1.3" fill="#569cd6"/><rect x="7" y="2.3" width="3" height="1.3" fill="#c8c8c8"/><rect x="11" y="2.3" width="4" height="1.3" fill="#569cd6"/><rect x="16" y="2.3" width="14" height="1.3" fill="#ce9178"/><rect x="30" y="2.3" width="1" height="1.3" fill="#c8c8c8"/><rect x="0" y="4.3" width="6" height="1.3" fill="#569cd6"/><rect x="7" y="4.3" width="1" height="1.3" fill="#d7ba3d"/><rect x="9" y="4.3" width="12" height="1.3" fill="#c8c8c8"/><rect x="22" y="4.3" width="1" height="1.3" fill="#d7ba3d"/><rect x="24" y="4.3" width="4" height="1.3" fill="#569cd6"/><rect x="29" y="4.3" width="17" height="1.3" fill="#ce9178"/><rect x="46" y="4.3" width="1" height="1.3" fill="#c8c8c8"/><rect x="0" y="8.3" width="5" height="1.3" fill="#569cd6"/><rect x="6" y="8.3" width="6" height="1.3" fill="#c8c8c8"/><rect x="13" y="8.3" width="1" height="1.3" fill="#c8c8c8"/><rect x="15" y="8.3" width="12" height="1.3" fill="#c8c8c8"/><rect x="27" y="8.3" width="1" height="1.3" fill="#d7ba3d"/><rect x="28" y="8.3" width="6" height="1.3" fill="#ce9178"/><rect x="34" y="8.3" width="1" height="1.3" fill="#d7ba3d"/><rect x="35" y="8.3" width="1" height="1.3" fill="#c8c8c8"/><rect x="0" y="12.3" width="9" height="1.3" fill="#569cd6"/><rect x="10" y="12.3" width="12" height="1.3" fill="#4ec9b0"/><rect x="23" y="12.3" width="1" height="1.3" fill="#d7ba3d"/><rect x="2" y="14.3" width="5" height="1.3" fill="#c8c8c8"/><rect x="8" y="14.3" width="6" height="1.3" fill="#569cd6"/><rect x="14" y="14.3" width="1" height="1.3" fill="#c8c8c8"/><rect x="2" y="16.3" width="12" height="1.3" fill="#c8c8c8"/><rect x="14" y="16.3" width="1" height="1.3" fill="#c678dd"/><rect x="15" y="16.3" width="4" height="1.3" fill="#c8c8c8"/><rect x="20" y="16.3" width="7" height="1.3" fill="#4ec9b0"/><rect x="27" y="16.3" width="1" height="1.3" fill="#c678dd"/><rect x="28" y="16.3" width="1" height="1.3" fill="#c8c8c8"/><rect x="30" y="16.3" width="7" height="1.3" fill="#4ec9b0"/><rect x="37" y="16.3" width="1" height="1.3" fill="#c8c8c8"/><rect x="38" y="16.3" width="10" height="1.3" fill="#4ec9b0"/><rect x="48" y="16.3" width="2" height="1.3" fill="#c8c8c8"/><rect x="0" y="18.3" width="1" height="1.3" fill="#d7ba3d"/><rect x="0" y="22.3" width="9" height="1.3" fill="#569cd6"/><rect x="10" y="22.3" width="10" height="1.3" fill="#4ec9b0"/><rect x="21" y="22.3" width="1" height="1.3" fill="#d7ba3d"/><rect x="2" y="24.3" width="8" height="1.3" fill="#c8c8c8"/><rect x="11" y="24.3" width="7" height="1.3" fill="#569cd6"/><rect x="18" y="24.3" width="1" height="1.3" fill="#c8c8c8"/><rect x="2" y="26.3" width="6" height="1.3" fill="#c8c8c8"/><rect x="9" y="26.3" width="1" height="1.3" fill="#c678dd"/><rect x="11" y="26.3" width="3" height="1.3" fill="#c8c8c8"/><rect x="15" y="26.3" width="6" height="1.3" fill="#569cd6"/><rect x="21" y="26.3" width="1" height="1.3" fill="#c8c8c8"/><rect x="23" y="26.3" width="6" height="1.3" fill="#c8c8c8"/><rect x="30" y="26.3" width="6" height="1.3" fill="#569cd6"/><rect x="36" y="26.3" width="1" height="1.3" fill="#c8c8c8"/><rect x="38" y="26.3" width="5" height="1.3" fill="#c8c8c8"/><rect x="44" y="26.3" width="6" height="1.3" fill="#569cd6"/><rect x="51" y="26.3" width="1" height="1.3" fill="#c678dd"/><rect x="52" y="26.3" width="1" height="1.3" fill="#c8c8c8"/><rect x="2" y="28.3" width="7" height="1.3" fill="#c8c8c8"/><rect x="10" y="28.3" width="6" height="1.3" fill="#569cd6"/><rect x="16" y="28.3" width="1" height="1.3" fill="#c8c8c8"/><rect x="0" y="30.3" width="1" height="1.3" fill="#d7ba3d"/><rect x="0" y="34.3" width="5" height="1.3" fill="#569cd6"/><rect x="6" y="34.3" width="12" height="1.3" fill="#c8c8c8"/><rect x="19" y="34.3" width="12" height="1.3" fill="#4ec9b0"/><rect x="32" y="34.3" width="1" height="1.3" fill="#c8c8c8"/><rect x="34" y="34.3" width="1" height="1.3" fill="#d7ba3d"/><rect x="2" y="36.3" width="5" height="1.3" fill="#c8c8c8"/><rect x="8" y="36.3" width="5" height="1.3" fill="#ce9178"/><rect x="13" y="36.3" width="1" height="1.3" fill="#c8c8c8"/><rect x="2" y="38.3" width="5" height="1.3" fill="#569cd6"/><rect x="8" y="38.3" width="12" height="1.3" fill="#c8c8c8"/><rect x="20" y="38.3" width="1" height="1.3" fill="#c678dd"/><rect x="21" y="38.3" width="3" height="1.3" fill="#c8c8c8"/><rect x="24" y="38.3" width="1" height="1.3" fill="#c678dd"/><rect x="26" y="38.3" width="1" height="1.3" fill="#c678dd"/><rect x="4" y="40.3" width="5" height="1.3" fill="#569cd6"/><rect x="10" y="40.3" width="6" height="1.3" fill="#c8c8c8"/><rect x="17" y="40.3" width="1" height="1.3" fill="#c8c8c8"/><rect x="19" y="40.3" width="25" height="1.3" fill="#c8c8c8"/><rect x="45" y="40.3" width="2" height="1.3" fill="#c8c8c8"/><rect x="48" y="40.3" width="11" height="1.3" fill="#c8c8c8"/><rect x="59" y="40.3" width="1" height="1.3" fill="#3d9de0"/><rect x="60" y="40.3" width="14" height="1.3" fill="#ce9178"/><rect x="74" y="40.3" width="1" height="1.3" fill="#3d9de0"/><rect x="75" y="40.3" width="1" height="1.3" fill="#c8c8c8"/><rect x="4" y="42.3" width="2" height="1.3" fill="#569cd6"/><rect x="7" y="42.3" width="1" height="1.3" fill="#3d9de0"/><rect x="8" y="42.3" width="19" height="1.3" fill="#c8c8c8"/><rect x="27" y="42.3" width="1" height="1.3" fill="#d7ba3d"/><rect x="28" y="42.3" width="7" height="1.3" fill="#ce9178"/><rect x="36" y="42.3" width="1" height="1.3" fill="#ce9178"/><rect x="37" y="42.3" width="1" height="1.3" fill="#d7ba3d"/><rect x="38" y="42.3" width="1" height="1.3" fill="#3d9de0"/><rect x="40" y="42.3" width="1" height="1.3" fill="#3d9de0"/><rect x="6" y="44.3" width="6" height="1.3" fill="#569cd6"/><rect x="13" y="44.3" width="1" height="1.3" fill="#d7ba3d"/><rect x="15" y="44.3" width="8" height="1.3" fill="#c8c8c8"/><rect x="24" y="44.3" width="5" height="1.3" fill="#569cd6"/><rect x="29" y="44.3" width="1" height="1.3" fill="#c8c8c8"/><rect x="31" y="44.3" width="6" height="1.3" fill="#c8c8c8"/><rect x="38" y="44.3" width="3" height="1.3" fill="#ce9178"/><rect x="42" y="44.3" width="6" height="1.3" fill="#ce9178"/><rect x="49" y="44.3" width="6" height="1.3" fill="#ce9178"/><rect x="56" y="44.3" width="1" height="1.3" fill="#d7ba3d"/><rect x="57" y="44.3" width="1" height="1.3" fill="#c8c8c8"/><rect x="4" y="46.3" width="1" height="1.3" fill="#3d9de0"/><rect x="4" y="50.3" width="5" height="1.3" fill="#569cd6"/><rect x="10" y="50.3" width="5" height="1.3" fill="#c8c8c8"/><rect x="16" y="50.3" width="1" height="1.3" fill="#c8c8c8"/><rect x="18" y="50.3" width="12" height="1.3" fill="#c8c8c8"/><rect x="30" y="50.3" width="1" height="1.3" fill="#3d9de0"/><rect x="31" y="50.3" width="1" height="1.3" fill="#b5cea8"/><rect x="32" y="50.3" width="1" height="1.3" fill="#3d9de0"/><rect x="33" y="50.3" width="1" height="1.3" fill="#c8c8c8"/><rect x="4" y="52.3" width="3" height="1.3" fill="#569cd6"/><rect x="8" y="52.3" width="1" height="1.3" fill="#3d9de0"/><rect x="6" y="54.3" width="5" height="1.3" fill="#569cd6"/><rect x="12" y="54.3" width="7" height="1.3" fill="#c8c8c8"/><rect x="20" y="54.3" width="1" height="1.3" fill="#c8c8c8"/><rect x="22" y="54.3" width="10" height="1.3" fill="#c8c8c8"/><rect x="32" y="54.3" width="1" height="1.3" fill="#d7ba3d"/><rect x="33" y="54.3" width="6" height="1.3" fill="#c8c8c8"/><rect x="40" y="54.3" width="12" height="1.3" fill="#c8c8c8"/><rect x="52" y="54.3" width="10" height="1.3" fill="#4ec9b0"/><rect x="62" y="54.3" width="1" height="1.3" fill="#c8c8c8"/><rect x="63" y="54.3" width="1" height="1.3" fill="#d7ba3d"/><rect x="65" y="54.3" width="2" height="1.3" fill="#569cd6"/><rect x="68" y="54.3" width="3" height="1.3" fill="#569cd6"/><rect x="71" y="54.3" width="1" height="1.3" fill="#c8c8c8"/><rect x="6" y="56.3" width="6" height="1.3" fill="#569cd6"/><rect x="13" y="56.3" width="1" height="1.3" fill="#d7ba3d"/><rect x="8" y="58.3" width="8" height="1.3" fill="#c8c8c8"/><rect x="17" y="58.3" width="4" height="1.3" fill="#569cd6"/><rect x="21" y="58.3" width="1" height="1.3" fill="#c8c8c8"/><rect x="8" y="60.3" width="5" height="1.3" fill="#c8c8c8"/><rect x="14" y="60.3" width="1" height="1.3" fill="#c678dd"/><rect x="16" y="60.3" width="3" height="1.3" fill="#c8c8c8"/><rect x="20" y="60.3" width="12" height="1.3" fill="#c8c8c8"/><rect x="33" y="60.3" width="6" height="1.3" fill="#c8c8c8"/><rect x="40" y="60.3" width="14" height="1.3" fill="#c8c8c8"/><rect x="55" y="60.3" width="5" height="1.3" fill="#c8c8c8"/><rect x="61" y="60.3" width="12" height="1.3" fill="#c8c8c8"/><rect x="74" y="60.3" width="1" height="1.3" fill="#c678dd"/><rect x="6" y="62.3" width="1" height="1.3" fill="#d7ba3d"/><rect x="7" y="62.3" width="1" height="1.3" fill="#c8c8c8"/><rect x="4" y="64.3" width="1" height="1.3" fill="#3d9de0"/><rect x="6" y="64.3" width="5" height="1.3" fill="#569cd6"/><rect x="12" y="64.3" width="1" height="1.3" fill="#3d9de0"/><rect x="6" y="66.3" width="6" height="1.3" fill="#569cd6"/><rect x="13" y="66.3" width="1" height="1.3" fill="#d7ba3d"/><rect x="15" y="66.3" width="8" height="1.3" fill="#c8c8c8"/><rect x="24" y="66.3" width="5" height="1.3" fill="#569cd6"/><rect x="29" y="66.3" width="1" height="1.3" fill="#c8c8c8"/><rect x="31" y="66.3" width="6" height="1.3" fill="#c8c8c8"/><rect x="38" y="66.3" width="8" height="1.3" fill="#ce9178"/><rect x="47" y="66.3" width="2" height="1.3" fill="#ce9178"/><rect x="50" y="66.3" width="7" height="1.3" fill="#ce9178"/><rect x="58" y="66.3" width="4" height="1.3" fill="#ce9178"/><rect x="63" y="66.3" width="1" height="1.3" fill="#d7ba3d"/><rect x="64" y="66.3" width="1" height="1.3" fill="#c8c8c8"/><rect x="4" y="68.3" width="1" height="1.3" fill="#3d9de0"/><rect x="2" y="70.3" width="1" height="1.3" fill="#c678dd"/><rect x="3" y="70.3" width="1" height="1.3" fill="#c8c8c8"/><rect x="0" y="72.3" width="1" height="1.3" fill="#d7ba3d"/><rect x="1" y="72.3" width="1" height="1.3" fill="#c8c8c8"/><rect x="0" y="76.3" width="5" height="1.3" fill="#569cd6"/><rect x="6" y="76.3" width="15" height="1.3" fill="#c8c8c8"/><rect x="22" y="76.3" width="12" height="1.3" fill="#4ec9b0"/><rect x="35" y="76.3" width="1" height="1.3" fill="#c8c8c8"/><rect x="37" y="76.3" width="1" height="1.3" fill="#d7ba3d"/><rect x="2" y="78.3" width="5" height="1.3" fill="#569cd6"/><rect x="8" y="78.3" width="12" height="1.3" fill="#c8c8c8"/><rect x="20" y="78.3" width="1" height="1.3" fill="#c8c8c8"/><rect x="21" y="78.3" width="3" height="1.3" fill="#c8c8c8"/><rect x="24" y="78.3" width="1" height="1.3" fill="#c8c8c8"/><rect x="26" y="78.3" width="1" height="1.3" fill="#c8c8c8"/><rect x="4" y="80.3" width="5" height="1.3" fill="#569cd6"/><rect x="10" y="80.3" width="6" height="1.3" fill="#c8c8c8"/><rect x="17" y="80.3" width="1" height="1.3" fill="#c8c8c8"/><rect x="19" y="80.3" width="3" height="1.3" fill="#c8c8c8"/><rect x="22" y="80.3" width="1" height="1.3" fill="#c8c8c8"/><rect x="23" y="80.3" width="7" height="1.3" fill="#c8c8c8"/><rect x="30" y="80.3" width="1" height="1.3" fill="#c8c8c8"/><rect x="31" y="80.3" width="11" height="1.3" fill="#ce9178"/><rect x="42" y="80.3" width="1" height="1.3" fill="#c8c8c8"/><rect x="44" y="80.3" width="2" height="1.3" fill="#569cd6"/><rect x="47" y="80.3" width="6" height="1.3" fill="#569cd6"/><rect x="53" y="80.3" width="1" height="1.3" fill="#c8c8c8"/><rect x="4" y="82.3" width="2" height="1.3" fill="#569cd6"/><rect x="7" y="82.3" width="1" height="1.3" fill="#c8c8c8"/><rect x="8" y="82.3" width="1" height="1.3" fill="#c8c8c8"/><rect x="9" y="82.3" width="6" height="1.3" fill="#c8c8c8"/><rect x="15" y="82.3" width="1" height="1.3" fill="#c8c8c8"/><rect x="17" y="82.3" width="1" height="1.3" fill="#c8c8c8"/><rect x="6" y="84.3" width="6" height="1.3" fill="#569cd6"/><rect x="13" y="84.3" width="1" height="1.3" fill="#c8c8c8"/><rect x="15" y="84.3" width="7" height="1.3" fill="#c8c8c8"/><rect x="22" y="84.3" width="1" height="1.3" fill="#c8c8c8"/><rect x="24" y="84.3" width="5" height="1.3" fill="#569cd6"/><rect x="29" y="84.3" width="1" height="1.3" fill="#c8c8c8"/><rect x="31" y="84.3" width="5" height="1.3" fill="#c8c8c8"/><rect x="36" y="84.3" width="1" height="1.3" fill="#c8c8c8"/><rect x="38" y="84.3" width="3" height="1.3" fill="#ce9178"/><rect x="42" y="84.3" width="3" height="1.3" fill="#ce9178"/><rect x="46" y="84.3" width="3" height="1.3" fill="#ce9178"/><rect x="50" y="84.3" width="9" height="1.3" fill="#ce9178"/><rect x="60" y="84.3" width="1" height="1.3" fill="#c8c8c8"/><rect x="61" y="84.3" width="1" height="1.3" fill="#c8c8c8"/><rect x="4" y="86.3" width="1" height="1.3" fill="#c8c8c8"/><rect x="4" y="90.3" width="2" height="1.3" fill="#6a9955"/><rect x="7" y="90.3" width="4" height="1.3" fill="#6a9955"/><rect x="12" y="90.3" width="2" height="1.3" fill="#6a9955"/><rect x="15" y="90.3" width="3" height="1.3" fill="#6a9955"/><rect x="19" y="90.3" width="2" height="1.3" fill="#6a9955"/><rect x="22" y="90.3" width="8" height="1.3" fill="#6a9955"/><rect x="4" y="92.3" width="5" height="1.3" fill="#569cd6"/><rect x="10" y="92.3" width="3" height="1.3" fill="#c8c8c8"/><rect x="14" y="92.3" width="1" height="1.3" fill="#c8c8c8"/><rect x="16" y="92.3" width="5" height="1.3" fill="#569cd6"/><rect x="22" y="92.3" width="2" height="1.3" fill="#c8c8c8"/><rect x="24" y="92.3" width="1" height="1.3" fill="#c8c8c8"/><rect x="25" y="92.3" width="7" height="1.3" fill="#c8c8c8"/><rect x="32" y="92.3" width="1" height="1.3" fill="#c8c8c8"/><rect x="33" y="92.3" width="9" height="1.3" fill="#c8c8c8"/><rect x="42" y="92.3" width="1" height="1.3" fill="#c8c8c8"/><rect x="43" y="92.3" width="6" height="1.3" fill="#c8c8c8"/><rect x="49" y="92.3" width="1" height="1.3" fill="#c8c8c8"/><rect x="50" y="92.3" width="1" height="1.3" fill="#c8c8c8"/><rect x="4" y="94.3" width="2" height="1.3" fill="#569cd6"/><rect x="7" y="94.3" width="1" height="1.3" fill="#c8c8c8"/><rect x="8" y="94.3" width="1" height="1.3" fill="#c8c8c8"/><rect x="9" y="94.3" width="3" height="1.3" fill="#c8c8c8"/><rect x="12" y="94.3" width="1" height="1.3" fill="#c8c8c8"/><rect x="14" y="94.3" width="1" height="1.3" fill="#c8c8c8"/><rect x="6" y="96.3" width="6" height="1.3" fill="#569cd6"/><rect x="13" y="96.3" width="1" height="1.3" fill="#c8c8c8"/><rect x="15" y="96.3" width="7" height="1.3" fill="#c8c8c8"/><rect x="22" y="96.3" width="1" height="1.3" fill="#c8c8c8"/><rect x="24" y="96.3" width="5" height="1.3" fill="#569cd6"/><rect x="29" y="96.3" width="1" height="1.3" fill="#c8c8c8"/><rect x="31" y="96.3" width="5" height="1.3" fill="#c8c8c8"/><rect x="36" y="96.3" width="1" height="1.3" fill="#c8c8c8"/><rect x="38" y="96.3" width="8" height="1.3" fill="#ce9178"/><rect x="47" y="96.3" width="3" height="1.3" fill="#ce9178"/><rect x="51" y="96.3" width="4" height="1.3" fill="#ce9178"/><rect x="56" y="96.3" width="1" height="1.3" fill="#c8c8c8"/><rect x="57" y="96.3" width="1" height="1.3" fill="#c8c8c8"/><rect x="4" y="98.3" width="1" height="1.3" fill="#c8c8c8"/><rect x="4" y="102.3" width="6" height="1.3" fill="#569cd6"/><rect x="11" y="102.3" width="1" height="1.3" fill="#c8c8c8"/><rect x="13" y="102.3" width="7" height="1.3" fill="#c8c8c8"/><rect x="20" y="102.3" width="1" height="1.3" fill="#c8c8c8"/><rect x="22" y="102.3" width="4" height="1.3" fill="#569cd6"/><rect x="26" y="102.3" width="1" height="1.3" fill="#c8c8c8"/><rect x="28" y="102.3" width="4" height="1.3" fill="#c8c8c8"/><rect x="32" y="102.3" width="1" height="1.3" fill="#c8c8c8"/><rect x="34" y="102.3" width="3" height="1.3" fill="#c8c8c8"/><rect x="37" y="102.3" width="1" height="1.3" fill="#c8c8c8"/><rect x="38" y="102.3" width="5" height="1.3" fill="#c8c8c8"/><rect x="44" y="102.3" width="1" height="1.3" fill="#c8c8c8"/><rect x="45" y="102.3" width="1" height="1.3" fill="#c8c8c8"/><rect x="2" y="104.3" width="1" height="1.3" fill="#c8c8c8"/><rect x="3" y="104.3" width="1" height="1.3" fill="#c8c8c8"/><rect x="0" y="106.3" width="1" height="1.3" fill="#c8c8c8"/><rect x="1" y="106.3" width="1" height="1.3" fill="#c8c8c8"/><rect x="0" y="110.3" width="5" height="1.3" fill="#569cd6"/><rect x="6" y="110.3" width="10" height="1.3" fill="#c8c8c8"/><rect x="16" y="110.3" width="1" height="1.3" fill="#c8c8c8"/><rect x="18" y="110.3" width="12" height="1.3" fill="#4ec9b0"/><rect x="30" y="110.3" width="1" height="1.3" fill="#c8c8c8"/><rect x="31" y="110.3" width="1" height="1.3" fill="#c8c8c8"/><rect x="33" y="110.3" width="1" height="1.3" fill="#c8c8c8"/><rect x="35" y="110.3" width="1" height="1.3" fill="#c8c8c8"/><rect x="36" y="110.3" width="11" height="1.3" fill="#c8c8c8"/><rect x="47" y="110.3" width="1" height="1.3" fill="#c8c8c8"/><rect x="49" y="110.3" width="14" height="1.3" fill="#c8c8c8"/><rect x="63" y="110.3" width="1" height="1.3" fill="#c8c8c8"/><rect x="64" y="110.3" width="1" height="1.3" fill="#c8c8c8"/><rect x="0" y="114.3" width="6" height="1.3" fill="#569cd6"/><rect x="7" y="114.3" width="8" height="1.3" fill="#569cd6"/><rect x="16" y="114.3" width="14" height="1.3" fill="#c8c8c8"/><rect x="30" y="114.3" width="1" height="1.3" fill="#c8c8c8"/><rect x="31" y="114.3" width="13" height="1.3" fill="#c8c8c8"/><rect x="44" y="114.3" width="1" height="1.3" fill="#c8c8c8"/><rect x="45" y="114.3" width="1" height="1.3" fill="#c8c8c8"/><rect x="47" y="114.3" width="6" height="1.3" fill="#569cd6"/><rect x="53" y="114.3" width="1" height="1.3" fill="#c8c8c8"/><rect x="54" y="114.3" width="1" height="1.3" fill="#c8c8c8"/><rect x="55" y="114.3" width="1" height="1.3" fill="#c8c8c8"/><rect x="57" y="114.3" width="1" height="1.3" fill="#c8c8c8"/><rect x="2" y="116.3" width="5" height="1.3" fill="#569cd6"/><rect x="8" y="116.3" width="6" height="1.3" fill="#c8c8c8"/><rect x="15" y="116.3" width="1" height="1.3" fill="#c8c8c8"/><rect x="17" y="116.3" width="13" height="1.3" fill="#c8c8c8"/><rect x="4" y="118.3" width="1" height="1.3" fill="#c8c8c8"/><rect x="6" y="118.3" width="10" height="1.3" fill="#c8c8c8"/><rect x="16" y="118.3" width="1" height="1.3" fill="#c8c8c8"/><rect x="17" y="118.3" width="6" height="1.3" fill="#c8c8c8"/><rect x="23" y="118.3" width="1" height="1.3" fill="#c8c8c8"/><rect x="24" y="118.3" width="1" height="1.3" fill="#c8c8c8"/><rect x="26" y="118.3" width="1" height="1.3" fill="#c8c8c8"/><rect x="27" y="118.3" width="1" height="1.3" fill="#c8c8c8"/><rect x="29" y="118.3" width="13" height="1.3" fill="#c8c8c8"/><rect x="42" y="118.3" width="1" height="1.3" fill="#c8c8c8"/><rect x="43" y="118.3" width="8" height="1.3" fill="#c8c8c8"/><rect x="51" y="118.3" width="1" height="1.3" fill="#c8c8c8"/><rect x="52" y="118.3" width="1" height="1.3" fill="#c8c8c8"/><rect x="53" y="118.3" width="1" height="1.3" fill="#c8c8c8"/><rect x="54" y="118.3" width="4" height="1.3" fill="#c8c8c8"/><rect x="58" y="118.3" width="1" height="1.3" fill="#c8c8c8"/><rect x="59" y="118.3" width="1" height="1.3" fill="#c8c8c8"/><rect x="4" y="120.3" width="1" height="1.3" fill="#c8c8c8"/><rect x="6" y="120.3" width="10" height="1.3" fill="#c8c8c8"/><rect x="16" y="120.3" width="1" height="1.3" fill="#c8c8c8"/><rect x="2" y="124.3" width="6" height="1.3" fill="#569cd6"/><rect x="9" y="124.3" width="5" height="1.3" fill="#569cd6"/><rect x="15" y="124.3" width="1" height="1.3" fill="#c8c8c8"/><rect x="16" y="124.3" width="3" height="1.3" fill="#c8c8c8"/><rect x="19" y="124.3" width="1" height="1.3" fill="#c8c8c8"/><rect x="21" y="124.3" width="7" height="1.3" fill="#4ec9b0"/><rect x="28" y="124.3" width="1" height="1.3" fill="#c8c8c8"/><rect x="30" y="124.3" width="3" height="1.3" fill="#c8c8c8"/><rect x="33" y="124.3" width="1" height="1.3" fill="#c8c8c8"/><rect x="35" y="124.3" width="8" height="1.3" fill="#4ec9b0"/><rect x="43" y="124.3" width="1" height="1.3" fill="#c8c8c8"/><rect x="45" y="124.3" width="4" height="1.3" fill="#c8c8c8"/><rect x="49" y="124.3" width="1" height="1.3" fill="#c8c8c8"/><rect x="51" y="124.3" width="12" height="1.3" fill="#4ec9b0"/><rect x="63" y="124.3" width="1" height="1.3" fill="#c8c8c8"/><rect x="65" y="124.3" width="1" height="1.3" fill="#c8c8c8"/><rect x="66" y="124.3" width="1" height="1.3" fill="#c8c8c8"/><rect x="68" y="124.3" width="1" height="1.3" fill="#c8c8c8"/><rect x="4" y="126.3" width="3" height="1.3" fill="#569cd6"/><rect x="8" y="126.3" width="1" height="1.3" fill="#c8c8c8"/><rect x="9" y="126.3" width="5" height="1.3" fill="#569cd6"/><rect x="15" y="126.3" width="8" height="1.3" fill="#c8c8c8"/><rect x="24" y="126.3" width="2" height="1.3" fill="#569cd6"/><rect x="27" y="126.3" width="6" height="1.3" fill="#c8c8c8"/><rect x="33" y="126.3" width="1" height="1.3" fill="#c8c8c8"/><rect x="35" y="126.3" width="1" height="1.3" fill="#c8c8c8"/><rect x="6" y="128.3" width="5" height="1.3" fill="#569cd6"/><rect x="12" y="128.3" width="6" height="1.3" fill="#c8c8c8"/><rect x="19" y="128.3" width="1" height="1.3" fill="#c8c8c8"/><rect x="21" y="128.3" width="5" height="1.3" fill="#569cd6"/><rect x="27" y="128.3" width="8" height="1.3" fill="#c8c8c8"/><rect x="35" y="128.3" width="1" height="1.3" fill="#c8c8c8"/><rect x="36" y="128.3" width="12" height="1.3" fill="#c8c8c8"/><rect x="48" y="128.3" width="1" height="1.3" fill="#c8c8c8"/><rect x="49" y="128.3" width="3" height="1.3" fill="#c8c8c8"/><rect x="52" y="128.3" width="1" height="1.3" fill="#c8c8c8"/><rect x="53" y="128.3" width="1" height="1.3" fill="#c8c8c8"/><rect x="6" y="130.3" width="2" height="1.3" fill="#569cd6"/><rect x="9" y="130.3" width="1" height="1.3" fill="#c8c8c8"/><rect x="10" y="130.3" width="6" height="1.3" fill="#c8c8c8"/><rect x="16" y="130.3" width="1" height="1.3" fill="#c8c8c8"/><rect x="17" y="130.3" width="7" height="1.3" fill="#c8c8c8"/><rect x="24" y="130.3" width="1" height="1.3" fill="#c8c8c8"/><rect x="26" y="130.3" width="1" height="1.3" fill="#c8c8c8"/><rect x="8" y="132.3" width="1" height="1.3" fill="#c8c8c8"/><rect x="9" y="132.3" width="3" height="1.3" fill="#c8c8c8"/><rect x="13" y="132.3" width="2" height="1.3" fill="#569cd6"/><rect x="16" y="132.3" width="3" height="1.3" fill="#569cd6"/><rect x="19" y="132.3" width="1" height="1.3" fill="#c8c8c8"/><rect x="20" y="132.3" width="1" height="1.3" fill="#c8c8c8"/><rect x="21" y="132.3" width="4" height="1.3" fill="#c8c8c8"/><rect x="26" y="132.3" width="1" height="1.3" fill="#c8c8c8"/><rect x="28" y="132.3" width="6" height="1.3" fill="#c8c8c8"/><rect x="34" y="132.3" width="1" height="1.3" fill="#c8c8c8"/><rect x="35" y="132.3" width="4" height="1.3" fill="#c8c8c8"/><rect x="39" y="132.3" width="1" height="1.3" fill="#c8c8c8"/><rect x="8" y="134.3" width="6" height="1.3" fill="#c8c8c8"/><rect x="14" y="134.3" width="1" height="1.3" fill="#c8c8c8"/><rect x="15" y="134.3" width="4" height="1.3" fill="#c8c8c8"/><rect x="19" y="134.3" width="1" height="1.3" fill="#c8c8c8"/><rect x="20" y="134.3" width="14" height="1.3" fill="#ce9178"/><rect x="35" y="134.3" width="3" height="1.3" fill="#ce9178"/><rect x="39" y="134.3" width="17" height="1.3" fill="#ce9178"/><rect x="56" y="134.3" width="1" height="1.3" fill="#c8c8c8"/><rect x="58" y="134.3" width="1" height="1.3" fill="#c8c8c8"/><rect x="60" y="134.3" width="6" height="1.3" fill="#c8c8c8"/><rect x="66" y="134.3" width="1" height="1.3" fill="#c8c8c8"/><rect x="68" y="134.3" width="6" height="1.3" fill="#c8c8c8"/><rect x="74" y="134.3" width="1" height="1.3" fill="#c8c8c8"/><rect x="75" y="134.3" width="4" height="1.3" fill="#c8c8c8"/><rect x="79" y="134.3" width="1" height="1.3" fill="#c8c8c8"/><rect x="80" y="134.3" width="1" height="1.3" fill="#c8c8c8"/><rect x="81" y="134.3" width="2" height="1.3" fill="#c8c8c8"/><rect x="84" y="134.3" width="1" height="1.3" fill="#c8c8c8"/><rect x="85" y="134.3" width="1" height="1.3" fill="#c8c8c8"/><rect x="86" y="134.3" width="1" height="1.3" fill="#c8c8c8"/><rect x="8" y="136.3" width="6" height="1.3" fill="#569cd6"/><rect x="15" y="136.3" width="4" height="1.3" fill="#c8c8c8"/><rect x="19" y="136.3" width="1" height="1.3" fill="#c8c8c8"/><rect x="20" y="136.3" width="1" height="1.3" fill="#c8c8c8"/><rect x="21" y="136.3" width="1" height="1.3" fill="#c8c8c8"/><rect x="6" y="138.3" width="1" height="1.3" fill="#c8c8c8"/><rect x="4" y="140.3" width="1" height="1.3" fill="#c8c8c8"/><rect x="4" y="144.3" width="6" height="1.3" fill="#c8c8c8"/><rect x="10" y="144.3" width="1" height="1.3" fill="#c8c8c8"/><rect x="11" y="144.3" width="4" height="1.3" fill="#c8c8c8"/><rect x="15" y="144.3" width="1" height="1.3" fill="#c8c8c8"/><rect x="16" y="144.3" width="15" height="1.3" fill="#ce9178"/><rect x="32" y="144.3" width="7" height="1.3" fill="#ce9178"/><rect x="39" y="144.3" width="1" height="1.3" fill="#c8c8c8"/><rect x="41" y="144.3" width="1" height="1.3" fill="#c8c8c8"/><rect x="43" y="144.3" width="4" height="1.3" fill="#c8c8c8"/><rect x="47" y="144.3" width="1" height="1.3" fill="#c8c8c8"/><rect x="49" y="144.3" width="3" height="1.3" fill="#c8c8c8"/><rect x="52" y="144.3" width="1" height="1.3" fill="#c8c8c8"/><rect x="53" y="144.3" width="4" height="1.3" fill="#c8c8c8"/><rect x="58" y="144.3" width="1" height="1.3" fill="#c8c8c8"/><rect x="59" y="144.3" width="1" height="1.3" fill="#c8c8c8"/><rect x="60" y="144.3" width="1" height="1.3" fill="#c8c8c8"/><rect x="4" y="146.3" width="3" height="1.3" fill="#c8c8c8"/><rect x="7" y="146.3" width="1" height="1.3" fill="#c8c8c8"/><rect x="8" y="146.3" width="6" height="1.3" fill="#c8c8c8"/><rect x="14" y="146.3" width="1" height="1.3" fill="#c8c8c8"/><rect x="15" y="146.3" width="3" height="1.3" fill="#b5cea8"/><rect x="18" y="146.3" width="1" height="1.3" fill="#c8c8c8"/><rect x="19" y="146.3" width="1" height="1.3" fill="#c8c8c8"/><rect x="20" y="146.3" width="4" height="1.3" fill="#c8c8c8"/><rect x="24" y="146.3" width="1" height="1.3" fill="#c8c8c8"/><rect x="25" y="146.3" width="1" height="1.3" fill="#c8c8c8"/><rect x="27" y="146.3" width="5" height="1.3" fill="#c8c8c8"/><rect x="32" y="146.3" width="1" height="1.3" fill="#c8c8c8"/><rect x="34" y="146.3" width="14" height="1.3" fill="#ce9178"/><rect x="49" y="146.3" width="1" height="1.3" fill="#c8c8c8"/><rect x="50" y="146.3" width="1" height="1.3" fill="#c8c8c8"/><rect x="51" y="146.3" width="1" height="1.3" fill="#c8c8c8"/><rect x="2" y="148.3" width="1" height="1.3" fill="#c8c8c8"/><rect x="3" y="148.3" width="1" height="1.3" fill="#c8c8c8"/><rect x="0" y="150.3" width="1" height="1.3" fill="#c8c8c8"/><rect x="0" y="154.3" width="6" height="1.3" fill="#569cd6"/><rect x="7" y="154.3" width="8" height="1.3" fill="#569cd6"/><rect x="16" y="154.3" width="11" height="1.3" fill="#c8c8c8"/><rect x="27" y="154.3" width="1" height="1.3" fill="#c8c8c8"/><rect x="28" y="154.3" width="4" height="1.3" fill="#c8c8c8"/><rect x="32" y="154.3" width="1" height="1.3" fill="#c8c8c8"/><rect x="34" y="154.3" width="6" height="1.3" fill="#569cd6"/><rect x="40" y="154.3" width="1" height="1.3" fill="#c8c8c8"/><rect x="42" y="154.3" width="1" height="1.3" fill="#c8c8c8"/><rect x="2" y="156.3" width="6" height="1.3" fill="#569cd6"/><rect x="9" y="156.3" width="1" height="1.3" fill="#c8c8c8"/><rect x="10" y="156.3" width="3" height="1.3" fill="#c8c8c8"/><rect x="13" y="156.3" width="1" height="1.3" fill="#c8c8c8"/><rect x="15" y="156.3" width="7" height="1.3" fill="#4ec9b0"/><rect x="22" y="156.3" width="1" height="1.3" fill="#c8c8c8"/><rect x="24" y="156.3" width="3" height="1.3" fill="#c8c8c8"/><rect x="27" y="156.3" width="1" height="1.3" fill="#c8c8c8"/><rect x="29" y="156.3" width="8" height="1.3" fill="#4ec9b0"/><rect x="37" y="156.3" width="1" height="1.3" fill="#c8c8c8"/><rect x="39" y="156.3" width="4" height="1.3" fill="#c8c8c8"/><rect x="43" y="156.3" width="1" height="1.3" fill="#c8c8c8"/><rect x="45" y="156.3" width="12" height="1.3" fill="#4ec9b0"/><rect x="57" y="156.3" width="1" height="1.3" fill="#c8c8c8"/><rect x="59" y="156.3" width="1" height="1.3" fill="#c8c8c8"/><rect x="60" y="156.3" width="1" height="1.3" fill="#c8c8c8"/><rect x="62" y="156.3" width="1" height="1.3" fill="#c8c8c8"/><rect x="4" y="158.3" width="5" height="1.3" fill="#569cd6"/><rect x="10" y="158.3" width="4" height="1.3" fill="#c8c8c8"/><rect x="15" y="158.3" width="1" height="1.3" fill="#c8c8c8"/><rect x="17" y="158.3" width="1" height="1.3" fill="#c8c8c8"/><rect x="18" y="158.3" width="3" height="1.3" fill="#c8c8c8"/><rect x="22" y="158.3" width="2" height="1.3" fill="#569cd6"/><rect x="25" y="158.3" width="3" height="1.3" fill="#569cd6"/><rect x="28" y="158.3" width="1" height="1.3" fill="#c8c8c8"/><rect x="29" y="158.3" width="1" height="1.3" fill="#c8c8c8"/><rect x="30" y="158.3" width="4" height="1.3" fill="#c8c8c8"/><rect x="34" y="158.3" width="1" height="1.3" fill="#c8c8c8"/><rect x="4" y="160.3" width="2" height="1.3" fill="#569cd6"/><rect x="7" y="160.3" width="1" height="1.3" fill="#c8c8c8"/><rect x="8" y="160.3" width="1" height="1.3" fill="#c8c8c8"/><rect x="9" y="160.3" width="4" height="1.3" fill="#c8c8c8"/><rect x="14" y="160.3" width="1" height="1.3" fill="#c8c8c8"/><rect x="15" y="160.3" width="1" height="1.3" fill="#c8c8c8"/><rect x="17" y="160.3" width="4" height="1.3" fill="#c8c8c8"/><rect x="21" y="160.3" width="1" height="1.3" fill="#c8c8c8"/><rect x="22" y="160.3" width="4" height="1.3" fill="#c8c8c8"/><rect x="27" y="160.3" width="1" height="1.3" fill="#c8c8c8"/><rect x="28" y="160.3" width="1" height="1.3" fill="#c8c8c8"/><rect x="29" y="160.3" width="1" height="1.3" fill="#c8c8c8"/><rect x="31" y="160.3" width="4" height="1.3" fill="#c8c8c8"/><rect x="35" y="160.3" width="1" height="1.3" fill="#c8c8c8"/><rect x="37" y="160.3" width="1" height="1.3" fill="#c8c8c8"/><rect x="6" y="162.3" width="6" height="1.3" fill="#c8c8c8"/><rect x="12" y="162.3" width="1" height="1.3" fill="#c8c8c8"/><rect x="13" y="162.3" width="4" height="1.3" fill="#c8c8c8"/><rect x="17" y="162.3" width="1" height="1.3" fill="#c8c8c8"/><rect x="18" y="162.3" width="11" height="1.3" fill="#ce9178"/><rect x="29" y="162.3" width="1" height="1.3" fill="#c8c8c8"/><rect x="31" y="162.3" width="1" height="1.3" fill="#c8c8c8"/><rect x="33" y="162.3" width="4" height="1.3" fill="#c8c8c8"/><rect x="37" y="162.3" width="1" height="1.3" fill="#c8c8c8"/><rect x="39" y="162.3" width="6" height="1.3" fill="#c8c8c8"/><rect x="45" y="162.3" width="1" height="1.3" fill="#c8c8c8"/><rect x="47" y="162.3" width="4" height="1.3" fill="#c8c8c8"/><rect x="51" y="162.3" width="1" height="1.3" fill="#c8c8c8"/><rect x="52" y="162.3" width="1" height="1.3" fill="#c8c8c8"/><rect x="53" y="162.3" width="2" height="1.3" fill="#c8c8c8"/><rect x="56" y="162.3" width="1" height="1.3" fill="#c8c8c8"/><rect x="57" y="162.3" width="1" height="1.3" fill="#c8c8c8"/><rect x="58" y="162.3" width="1" height="1.3" fill="#c8c8c8"/><rect x="6" y="164.3" width="6" height="1.3" fill="#569cd6"/><rect x="13" y="164.3" width="3" height="1.3" fill="#c8c8c8"/><rect x="16" y="164.3" width="1" height="1.3" fill="#c8c8c8"/><rect x="17" y="164.3" width="6" height="1.3" fill="#c8c8c8"/><rect x="23" y="164.3" width="1" height="1.3" fill="#c8c8c8"/><rect x="24" y="164.3" width="3" height="1.3" fill="#b5cea8"/><rect x="27" y="164.3" width="1" height="1.3" fill="#c8c8c8"/><rect x="28" y="164.3" width="1" height="1.3" fill="#c8c8c8"/><rect x="29" y="164.3" width="4" height="1.3" fill="#c8c8c8"/><rect x="33" y="164.3" width="1" height="1.3" fill="#c8c8c8"/><rect x="34" y="164.3" width="1" height="1.3" fill="#c8c8c8"/><rect x="36" y="164.3" width="5" height="1.3" fill="#c8c8c8"/><rect x="41" y="164.3" width="1" height="1.3" fill="#c8c8c8"/><rect x="43" y="164.3" width="11" height="1.3" fill="#ce9178"/><rect x="55" y="164.3" width="1" height="1.3" fill="#c8c8c8"/><rect x="56" y="164.3" width="1" height="1.3" fill="#c8c8c8"/><rect x="57" y="164.3" width="1" height="1.3" fill="#c8c8c8"/><rect x="4" y="166.3" width="1" height="1.3" fill="#c8c8c8"/><rect x="4" y="168.3" width="6" height="1.3" fill="#c8c8c8"/><rect x="10" y="168.3" width="1" height="1.3" fill="#c8c8c8"/><rect x="11" y="168.3" width="5" height="1.3" fill="#c8c8c8"/><rect x="16" y="168.3" width="1" height="1.3" fill="#c8c8c8"/><rect x="17" y="168.3" width="5" height="1.3" fill="#ce9178"/><rect x="23" y="168.3" width="5" height="1.3" fill="#ce9178"/><rect x="29" y="168.3" width="7" height="1.3" fill="#ce9178"/><rect x="36" y="168.3" width="1" height="1.3" fill="#c8c8c8"/><rect x="38" y="168.3" width="1" height="1.3" fill="#c8c8c8"/><rect x="40" y="168.3" width="4" height="1.3" fill="#c8c8c8"/><rect x="45" y="168.3" width="1" height="1.3" fill="#c8c8c8"/><rect x="46" y="168.3" width="1" height="1.3" fill="#c8c8c8"/><rect x="47" y="168.3" width="1" height="1.3" fill="#c8c8c8"/><rect x="4" y="170.3" width="4" height="1.3" fill="#c8c8c8"/><rect x="8" y="170.3" width="1" height="1.3" fill="#c8c8c8"/><rect x="9" y="170.3" width="1" height="1.3" fill="#c8c8c8"/><rect x="10" y="170.3" width="1" height="1.3" fill="#c8c8c8"/><rect x="2" y="172.3" width="1" height="1.3" fill="#c8c8c8"/><rect x="3" y="172.3" width="1" height="1.3" fill="#c8c8c8"/><rect x="0" y="174.3" width="1" height="1.3" fill="#c8c8c8"/><rect x="0" y="178.3" width="6" height="1.3" fill="#569cd6"/><rect x="7" y="178.3" width="7" height="1.3" fill="#569cd6"/><rect x="15" y="178.3" width="14" height="1.3" fill="#c8c8c8"/><rect x="29" y="178.3" width="1" height="1.3" fill="#c8c8c8"/></svg></div>
    <div id="vsb"></div>
  </div>
</div>

<div id="rp">
  <div class="rh">
    <div class="wdd" style="left:8px"><div class="abs" style="left:8px;top:9px;width:16px;height:12px;"><svg width="16" height="12" viewBox="0 0 16 12"><path d="M0 12 4.4 0h2.4l4.4 12H8.8l-.9-2.5H3.3L2.4 12zM4.1 7.4h3L5.6 3.3z" fill="#f2f2f2"/><path d="M9.2 0h2.4L16 12h-2.4z" fill="#f2f2f2"/></svg></div><div class="abs" style="left:28px;top:7px;line-height:16px;white-space:nowrap">Working with project files</div><div class="abs" style="left:188px;top:10px;width:11px;height:11px;color:#e0e0e0;"><svg width="11" height="11" viewBox="0 0 11 11" fill="none" stroke="currentColor" stroke-width="1.5" stroke-linecap="round" stroke-linejoin="round" stroke-width="1.6"><path d="M2 4l3.5 3.5L9 4"/></svg></div></div><div class="abs" style="left:245px;top:17px;width:14px;height:14px;"><svg width="14" height="14" viewBox="0 0 14 14" fill="none" stroke="#9a9a9a" stroke-width="1.3" stroke-linecap="round"><path d="M1.5 4.5v-3h3M1.5 1.5l3 3M12.5 4.5v-3h-3M12.5 1.5l-3 3M1.5 9.5v3h3M1.5 12.5l3-3M12.5 9.5v3h-3M12.5 12.5l-3-3"/></svg></div><div class="newb"><div class="abs" style="left:14px;top:9px;width:14px;height:14px;"><svg width="14" height="14" viewBox="0 0 14 14"><path d="M7 2v10M2 7h10" stroke="#fff" stroke-width="1.6" stroke-linecap="round"/></svg></div><div class="abs" style="left:32px;top:8px;line-height:16px">New</div></div>
  </div>
  <div class="card"><div class="abs" style="left:10px;top:12px;width:28px;height:28px;background:#2a5038;border-radius:14px;display:flex;align-items:center;justify-content:center"><svg width="16" height="16" viewBox="0 0 16 16" fill="none" stroke="#4fdc7c" stroke-width="1.6" stroke-linecap="round" stroke-linejoin="round"><circle cx="8" cy="5" r="2.6"/><path d="M3 13.5v-1c0-1.7 1.2-3 3-3h4c1.8 0 3 1.3 3 3v1z"/></svg></div><div class="nm" style="left:48px;top:18px">You</div><div class="tm" style="left:79px;top:19px">7:56:45 AM</div><div class="msg" style="top:57px;left:34px;font-size:16px">/review-pr</div></div><div class="abs" style="left:12px;top:174px;width:28px;height:28px;background:#354660;border-radius:14px;display:flex;align-items:center;justify-content:center;padding-bottom:2px"><svg width="18" height="13" viewBox="0 0 16 12"><path d="M0 12 4.4 0h2.4l4.4 12H8.8l-.9-2.5H3.3L2.4 12zM4.1 7.4h3L5.6 3.3z" fill="#5aa6f5"/><path d="M9.2 0h2.4L16 12h-2.4z" fill="#5aa6f5"/></svg></div><div class="nm" style="left:49px;top:180px">Claude Agent</div><div class="tm" style="left:146px;top:181px">7:56:45 AM</div><div class="abs" style="left:317px;top:179px;width:16px;height:14px;"><svg width="16" height="14" viewBox="0 0 16 14" fill="none" stroke="#8a8a8a" stroke-width="1.4" stroke-linecap="round"><path d="M1.2 7S3.8 2.5 8 2.5 14.8 7 14.8 7 12.2 11.5 8 11.5 1.2 7 1.2 7z"/><circle cx="8" cy="7" r="2.2"/><path d="M2 1l12 12"/></svg></div><div class="msg" style="top:220px;left:36px;">I've reviewed the changes on this branch</div><div class="msg" style="top:245px;left:36px;">compared to main. Here's my analysis:</div><div class="msg" style="top:277px;left:36px;"><b>Changes reviewed:</b> 4 files, +127 -43 lines</div><div class="msg" style="top:309px;left:36px;"><b>Code quality:</b> The auth middleware</div><div class="msg" style="top:334px;left:36px;">refactor looks solid. The strategy pattern is</div><div class="msg" style="top:358px;left:36px;">a good choice here.</div><div class="msg" style="top:390px;left:36px;"><b>Suggestions:</b></div><div class="msg" style="top:423px;left:44px;">1. Add error handling for the case where</div><div class="msg" style="top:447px;left:60px;">no strategy matches</div><div class="msg" style="top:476px;left:44px;">2. Consider adding a timeout to the token</div><div class="msg" style="top:500px;left:60px;">validation call</div><div class="msg" style="top:528px;left:44px;">3. The rate limiter config should be</div><div class="msg" style="top:553px;left:60px;">extracted to environment variables</div><div class="tm" style="left:36px;top:592px;font-size:12.5px;color:#7a7a7a;letter-spacing:.1px">Finished in 5ms</div>
  <div id="inp">
    <div class="abs" style="left:10px;top:8px;width:60px;height:21px;background:#4a2a1f;border-radius:11px"><div style="font-size:11px;font-weight:bold;letter-spacing:.4px;color:#f08a4b;text-align:center;line-height:21px">AGENT</div></div><div class="abs" style="left:78px;top:6px;width:200px;height:26px;border:1px solid #4a4a4a;border-radius:13px"><div class="abs" style="left:9px;top:5px;font-size:12px;color:#d8d8d8;white-space:nowrap;line-height:14px;letter-spacing:.25px">claude-sonnet-4-5-202509...</div><div class="abs" style="left:178px;top:8px;width:10px;height:10px;color:#d0d0d0;"><svg width="10" height="10" viewBox="0 0 10 10" fill="none" stroke="currentColor" stroke-width="1.5" stroke-linecap="round" stroke-linejoin="round" stroke-width="1.5"><path d="M2 3.5 5 6.5 8 3.5"/></svg></div></div><div class="abs" style="left:306px;top:7px;width:30px;height:23px;border:1px solid #4a4a4a;border-radius:5px"><div style="font-size:14px;color:#d0d0d0;text-align:center;line-height:20px;letter-spacing:.5px">--</div></div><div class="abs" style="left:10px;top:37px;width:281px;height:54px;border:1px solid #5a9ef2;border-radius:6px;background:#2a2a2a"><div class="abs" style="left:12px;top:8px;font-size:13px;line-height:19px;color:#8a8a8a;width:250px;letter-spacing:.2px">Ask a question. @ for files. / for commands</div></div><div class="abs" style="left:299px;top:37px;width:36px;height:36px;background:#3d5f8f;border-radius:7px;display:flex;align-items:center;justify-content:center"><svg width="16" height="16" viewBox="0 0 16 16" fill="none" stroke="#8796aa" stroke-width="1.4" stroke-linejoin="round"><path d="M14.5 1.5 1.5 7l5.5 2 2 5.5z"/><path d="M7 9l7.5-7.5"/></svg></div>
  </div>
</div>

</body></html>
